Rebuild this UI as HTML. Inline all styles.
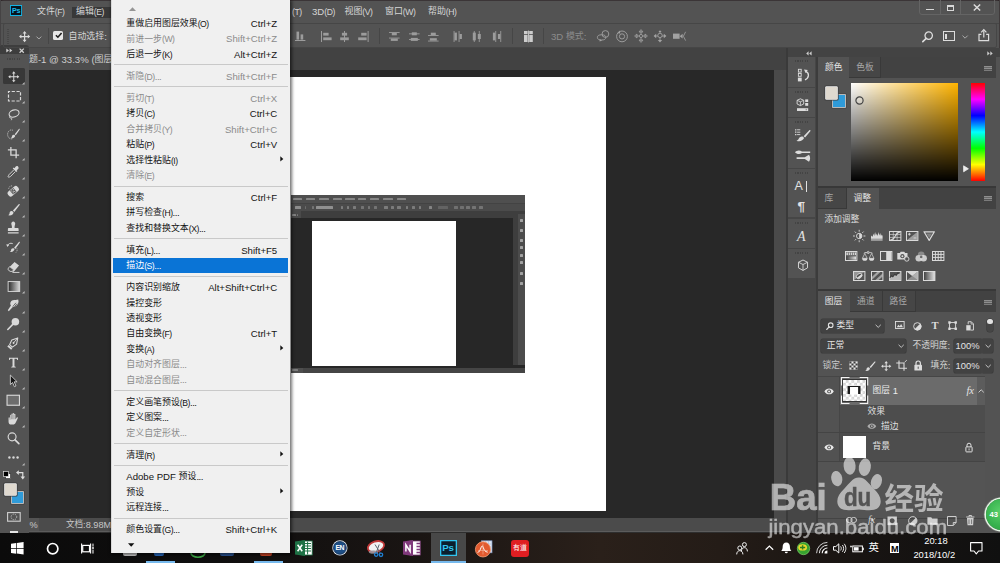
<!DOCTYPE html>
<html lang="zh"><head><meta charset="utf-8"><title>Photoshop - 编辑菜单</title><style>
html,body{margin:0;padding:0}
body{width:1000px;height:563px;overflow:hidden;background:#535353;position:relative;font-family:"Liberation Sans","Noto Sans CJK SC",sans-serif}
.r,.t,.i{position:absolute}
.t{white-space:nowrap;display:flex;align-items:center}
.c{display:block;flex:none;position:relative;top:-.04em;font-size:.93em;width:1em;height:1em;line-height:1em;color:inherit}
.i{overflow:visible}
.k{display:block;flex:none;font-size:.9em;letter-spacing:-.45px}
.d{display:block;flex:none;letter-spacing:-.5px}

</style></head><body>
<div class="r" style="left:0px;top:0px;width:1000px;height:24px;background:#535353;"></div>
<div class="r" style="left:0px;top:23px;width:1000px;height:1px;background:#474747;"></div>
<div class="r" style="left:0px;top:24px;width:1000px;height:24px;background:#535353;"></div>
<div class="r" style="left:28px;top:48px;width:758px;height:22px;background:#424242;"></div>
<div class="r" style="left:28px;top:48px;width:180px;height:22px;background:#4d4d4d;"></div>
<div class="r" style="left:28px;top:70px;width:746px;height:448px;background:#282828;"></div>
<div class="r" style="left:774px;top:70px;width:12.4px;height:448px;background:#4a4a4a;"></div>
<div class="r" style="left:786px;top:48px;width:2px;height:485px;background:#3a3a3a;"></div>
<div class="r" style="left:290px;top:77.2px;width:315.5px;height:433.5px;background:#fff;"></div>
<div class="r" style="left:28px;top:518px;width:758px;height:13.6px;background:#4b4b4b;"></div>
<div class="r" style="left:28px;top:518px;width:11px;height:13px;background:#535353;"></div>
<div class="r" style="left:28px;top:531.4px;width:972px;height:0.8px;background:#5c5c5c;"></div>
<div class="r" style="left:28px;top:532.2px;width:972px;height:0.8px;background:#2e2e2e;"></div>
<div class="t " style="left:37px;top:4.50px;height:14px;font-size:9.6px;line-height:14px;--c:#d6d6d6;color:#d6d6d6;"><span class="c">文</span><span class="c">件</span><span class="k">(F)</span></div>
<div class="r" style="left:72px;top:7px;width:39px;height:11px;background:#383838;"></div>
<div class="t " style="left:76px;top:4.50px;height:14px;font-size:9.6px;line-height:14px;--c:#d6d6d6;color:#d6d6d6;"><span class="c">编</span><span class="c">辑</span><span class="k">(E)</span></div>
<div class="t " style="left:292px;top:4.50px;height:14px;font-size:9.6px;line-height:14px;--c:#d6d6d6;color:#d6d6d6;"><span class="k">(T)</span></div>
<div class="t " style="left:312px;top:4.50px;height:14px;font-size:9.6px;line-height:14px;--c:#d6d6d6;color:#d6d6d6;">3D<span class="k">(D)</span></div>
<div class="t " style="left:344.5px;top:4.50px;height:14px;font-size:9.6px;line-height:14px;--c:#d6d6d6;color:#d6d6d6;"><span class="c">视</span><span class="c">图</span><span class="k">(V)</span></div>
<div class="t " style="left:385px;top:4.50px;height:14px;font-size:9.6px;line-height:14px;--c:#d6d6d6;color:#d6d6d6;"><span class="c">窗</span><span class="c">口</span><span class="k">(W)</span></div>
<div class="t " style="left:428px;top:4.50px;height:14px;font-size:9.6px;line-height:14px;--c:#d6d6d6;color:#d6d6d6;"><span class="c">帮</span><span class="c">助</span><span class="k">(H)</span></div>
<div class="t " style="left:68.5px;top:29.50px;height:14px;font-size:9.6px;line-height:14px;--c:#d6d6d6;color:#d6d6d6;"><span class="c">自</span><span class="c">动</span><span class="c">选</span><span class="c">择</span>:</div>
<div class="t " style="left:551px;top:29.50px;height:14px;font-size:9.6px;line-height:14px;--c:#8c8c8c;color:#8c8c8c;">3D&nbsp;<span class="c">模</span><span class="c">式</span>:</div>
<div class="t " style="left:29px;top:52.50px;height:14px;font-size:9.6px;line-height:14px;--c:#cfcfcf;color:#cfcfcf;"><span class="c">题</span>-1&nbsp;@&nbsp;33.3%&nbsp;(<span class="c">图</span><span class="c">层</span></div>
<div class="t " style="left:29.5px;top:517.50px;height:14px;font-size:9.2px;line-height:14px;--c:#c8c8c8;color:#c8c8c8;">%</div>
<div class="t " style="left:66px;top:517.50px;height:14px;font-size:9.2px;line-height:14px;--c:#c8c8c8;color:#c8c8c8;"><span class="c">文</span><span class="c">档</span>:8.98M</div>
<div class="r" style="left:0px;top:45.4px;width:28.5px;height:487.6px;background:#535353;"></div>
<div class="r" style="left:0px;top:45.4px;width:28.5px;height:9px;background:#3d3d3d;border-radius:0 3px 0 0"></div>
<div class="r" style="left:788px;top:48px;width:212px;height:9px;background:#424242;"></div>
<div class="r" style="left:788px;top:57px;width:28px;height:476px;background:#454545;"></div>
<div class="r" style="left:816px;top:57px;width:2px;height:476px;background:#3a3a3a;"></div>
<div class="r" style="left:818px;top:57px;width:182px;height:476px;background:#535353;"></div>
<div class="r" style="left:0;top:0;width:1000px;height:8px;box-shadow:inset 0 1px 0 #3b3537;pointer-events:none"></div>
<svg class="i" style="left:0px;top:0px;" width="4" height="4" viewBox="0 0 4 4"><path d="M0 0h4a4 4 0 0 0 -4 4z" fill="#2b2224"/></svg>
<svg class="i" style="left:996px;top:0px;" width="4" height="4" viewBox="0 0 4 4"><path d="M4 0h-4a4 4 0 0 1 4 4z" fill="#2b2224"/></svg>
<div class="r" style="left:999px;top:0px;width:1px;height:48px;background:#3f3a3b;"></div>
<div class="r" style="left:0px;top:0px;width:1px;height:46px;background:#454344;"></div>
<div class="r" style="left:10px;top:5px;width:12px;height:11.3px;background:#06141f;box-shadow:inset 0 0 0 .9px #12b4e6"></div>
<div class="t " style="left:12px;top:3.80px;height:14px;font-size:7.2px;line-height:14px;--c:#19bdf0;color:#19bdf0;font-weight:bold;letter-spacing:-.3px">Ps</div>
<div class="r" style="left:919px;top:-1px;width:75.500px;height:15.500px;border:1px solid #646464;border-radius:0 0 3px 3px;box-sizing:border-box"></div>
<div class="r" style="left:940.2px;top:0px;width:1px;height:14px;background:#646464;"></div>
<div class="r" style="left:959.8px;top:0px;width:1px;height:14px;background:#646464;"></div>
<div class="r" style="left:926px;top:8.5px;width:7.6px;height:1.9px;background:#d8d8d8;"></div>
<div class="r" style="left:946.500px;top:5px;width:7.600px;height:6.200px;border:1.500px solid #d8d8d8;border-top-width:2px;box-sizing:border-box"></div>
<svg class="i" style="left:973.4px;top:3.8px;" width="8" height="7" viewBox="0 0 8 7"><path d="M.8 .5L7.200 6.500M7.200 .5L.8 6.500" stroke="#dcdcdc" stroke-width="1.500"/></svg>
<div class="r" style="left:3px;top:23.200px;width:993.500px;height:25px;border:1px solid #464646;border-radius:2px;box-sizing:border-box"></div>
<div class="r" style="left:7.4px;top:29.4px;width:1.6px;height:14.4px;background:repeating-linear-gradient(0deg,#474747 0 1px,transparent 1px 2px);"></div>
<svg class="i" style="left:18.8px;top:31.3px;" width="11.2" height="11.2" viewBox="0 0 11.2 11.2"><path d="M5.600 1.800v7.600M1.800 5.600h7.600" stroke="#dadada" stroke-width="1.200"/><path d="M5.600 0l2 2.400h-4zM5.600 11.200l2-2.400h-4zM0 5.600l2.400-2v4zM11.200 5.600l-2.400-2v4z" fill="#dadada"/></svg>
<svg class="i" style="left:36.4px;top:35.6px;" width="5.8" height="3.8" viewBox="0 0 5.8 3.8"><path d="M.5 .6L2.900 3 5.300 .6" fill="none" stroke="#b5b5b5" stroke-width=".9"/></svg>
<div class="r" style="left:48.3px;top:28px;width:1px;height:16.4px;background:#464646;"></div>
<div class="r" style="left:53.2px;top:30.6px;width:10px;height:9.8px;background:#e6e6e6;border-radius:1.600px"></div>
<svg class="i" style="left:54.6px;top:32.4px;" width="7.4" height="6.4" viewBox="0 0 7.4 6.4"><path d="M.9 3.200L2.900 5.200 6.600 .9" fill="none" stroke="#1e1e1e" stroke-width="1.600"/></svg>
<svg class="i" style="left:295.4px;top:30.5px;" width="11" height="11" viewBox="0 0 11 11"><rect x="1.500" y=".6" width="2.600" height="8" fill="#9c9c9c"/><rect x="5.600" y="3.400" width="2.600" height="5.200" fill="#9c9c9c"/><rect x="0" y="9" width="10.400" height="1" fill="#9c9c9c"/></svg>
<svg class="i" style="left:320.8px;top:30.5px;" width="11" height="11" viewBox="0 0 11 11"><rect x="0" y="0" width="1" height="11" fill="#9c9c9c"/><rect x="2.200" y="1.800" width="5.400" height="2.800" fill="#9c9c9c"/><rect x="2.200" y="6.400" width="8.400" height="2.800" fill="#9c9c9c"/></svg>
<svg class="i" style="left:340.4px;top:30.5px;" width="11" height="11" viewBox="0 0 11 11"><rect x="4" y="0" width="1" height="11" fill="#9c9c9c"/><rect x="1.900" y="1.800" width="5.200" height="2.800" fill="#9c9c9c"/><rect x=".2" y="6.400" width="8.600" height="2.800" fill="#9c9c9c"/></svg>
<svg class="i" style="left:358.4px;top:30.5px;" width="11" height="11" viewBox="0 0 11 11"><rect x="9.600" y="0" width="1" height="11" fill="#9c9c9c"/><rect x="3.200" y="1.800" width="5.400" height="2.800" fill="#9c9c9c"/><rect x=".2" y="6.400" width="8.400" height="2.800" fill="#9c9c9c"/></svg>
<div class="r" style="left:379px;top:28px;width:1px;height:16.4px;background:#464646;"></div>
<svg class="i" style="left:389.4px;top:30.5px;" width="11" height="11" viewBox="0 0 11 11"><rect x="0" y="1" width="10.600" height=".9" fill="#9c9c9c"/><rect x="2.800" y="1.900" width="5" height="2.400" fill="#9c9c9c"/><rect x="0" y="6.600" width="10.600" height=".9" fill="#9c9c9c"/><rect x="1.800" y="7.500" width="7" height="2.400" fill="#9c9c9c"/></svg>
<svg class="i" style="left:408.8px;top:30.5px;" width="11" height="11" viewBox="0 0 11 11"><rect x="0" y="2.400" width="10.600" height=".9" fill="#9c9c9c"/><rect x="2.800" y="1.300" width="5" height="3" fill="#9c9c9c"/><rect x="0" y="8" width="10.600" height=".9" fill="#9c9c9c"/><rect x="1.800" y="6.900" width="7" height="3" fill="#9c9c9c"/></svg>
<svg class="i" style="left:427.6px;top:30.5px;" width="11" height="11" viewBox="0 0 11 11"><rect x="0" y="4.100" width="10.600" height=".9" fill="#9c9c9c"/><rect x="2.800" y="1.700" width="5" height="2.400" fill="#9c9c9c"/><rect x="0" y="9.600" width="10.600" height=".9" fill="#9c9c9c"/><rect x="1.800" y="7.200" width="7" height="2.400" fill="#9c9c9c"/></svg>
<svg class="i" style="left:453.2px;top:30.5px;" width="11" height="11" viewBox="0 0 11 11"><rect x=".6" y="0" width=".9" height="11" fill="#9c9c9c"/><rect x="1.500" y="1.600" width="2.400" height="7.800" fill="#9c9c9c"/><rect x="5.600" y="0" width=".9" height="11" fill="#9c9c9c"/><rect x="6.500" y="3" width="2.400" height="5" fill="#9c9c9c"/></svg>
<svg class="i" style="left:472.4px;top:30.5px;" width="11" height="11" viewBox="0 0 11 11"><rect x="1.800" y="0" width=".9" height="11" fill="#9c9c9c"/><rect x=".8" y="1.600" width="3" height="7.800" fill="#9c9c9c"/><rect x="6.800" y="0" width=".9" height="11" fill="#9c9c9c"/><rect x="5.800" y="3" width="3" height="5" fill="#9c9c9c"/></svg>
<svg class="i" style="left:491.8px;top:30.5px;" width="11" height="11" viewBox="0 0 11 11"><rect x="3.300" y="0" width=".9" height="11" fill="#9c9c9c"/><rect x=".9" y="1.600" width="2.400" height="7.800" fill="#9c9c9c"/><rect x="8.300" y="0" width=".9" height="11" fill="#9c9c9c"/><rect x="5.900" y="3" width="2.400" height="5" fill="#9c9c9c"/></svg>
<div class="r" style="left:512px;top:28px;width:1px;height:16.4px;background:#464646;"></div>
<svg class="i" style="left:523.8px;top:30.5px;" width="11" height="11" viewBox="0 0 11 11"><rect x="0" y="0" width="3.600" height="3.200" fill="#cdcdcd"/><rect x="5.200" y="0" width="3.600" height="3.200" fill="#cdcdcd"/><rect x="0" y="4" width="3.600" height="7" fill="#cdcdcd"/><rect x="5.200" y="4" width="3.600" height="7" fill="#cdcdcd"/><rect x="4" y="-.4" width=".9" height="11.800" fill="#cdcdcd"/></svg>
<div class="r" style="left:543.2px;top:28px;width:1px;height:16.4px;background:#464646;"></div>
<svg class="i" style="left:596.6px;top:30px;" width="13" height="12" viewBox="0 0 13 12"><ellipse cx="4.600" cy="7.400" rx="4.200" ry="2.600" fill="none" stroke="#a2a2a2" stroke-width=".9"/><circle cx="8.400" cy="4" r="3.400" fill="none" stroke="#a2a2a2" stroke-width=".9"/><path d="M2.600 9.200l2.600 1.400-2.600 1z" fill="#a2a2a2"/></svg>
<svg class="i" style="left:616px;top:29.8px;" width="12" height="12.5" viewBox="0 0 12 12.5"><circle cx="6" cy="6.400" r="5.400" fill="none" stroke="#a2a2a2" stroke-width=".9"/><circle cx="6" cy="6.400" r="2.600" fill="none" stroke="#a2a2a2" stroke-width=".9"/><path d="M1.200 3.200l2.800-2.600.2 3z" fill="#a2a2a2"/></svg>
<svg class="i" style="left:634.8px;top:30px;" width="12" height="12" viewBox="0 0 12 12"><path d="M6 1v10M1 6h10" stroke="#a2a2a2" stroke-width=".9"/><path d="M6 -.4l2 2.400h-4zM6 12.400l2-2.400h-4zM-.4 6l2.400-2v4zM12.400 6l-2.400-2v4z" fill="none" stroke="#a2a2a2" stroke-width=".8"/><circle cx="6" cy="6" r="1.600" fill="#535353" stroke="#a2a2a2" stroke-width=".8"/></svg>
<svg class="i" style="left:654px;top:29.8px;" width="12" height="12.5" viewBox="0 0 12 12.5"><path d="M6 1v10M1 6h10" stroke="#a2a2a2" stroke-width=".9"/><path d="M6 12.600l2.200-2.600h-4.400zM-.4 6l2.600-2.200v4.400zM12.400 6l-2.600-2.200v4.400zM6 .2l1.600 1.800h-3.200z" fill="#a2a2a2"/><circle cx="6" cy="5.400" r="2.200" fill="#535353" stroke="#a2a2a2" stroke-width=".9"/></svg>
<svg class="i" style="left:672.8px;top:30.8px;" width="13" height="11" viewBox="0 0 13 11"><rect x="0" y="2.600" width="6.600" height="5.200" fill="#a2a2a2"/><path d="M6.600 5.200l3-2.400v4.800z" fill="#a2a2a2"/><path d="M12.600 .8l-2.200 4.400 2.200 4.400" fill="none" stroke="#a2a2a2" stroke-width=".8"/></svg>
<svg class="i" style="left:921.8px;top:30.6px;" width="11.4" height="11.4" viewBox="0 0 11.4 11.4"><circle cx="6.700" cy="4.600" r="3.700" fill="none" stroke="#dedede" stroke-width="1.300"/><path d="M4.200 7.400L.8 10.600" stroke="#dedede" stroke-width="1.600" stroke-linecap="round"/></svg>
<div class="r" style="left:943.400px;top:31.400px;width:11.800px;height:9.400px;border:1.200px solid #dcdcdc;border-top-width:1.800px;box-sizing:border-box"></div>
<div class="r" style="left:945.4px;top:34.2px;width:1.8px;height:4.6px;background:#dcdcdc;"></div>
<svg class="i" style="left:962.2px;top:34.8px;" width="6.2" height="4" viewBox="0 0 6.2 4"><path d="M.5 .6L3.100 3.200 5.700 .6" fill="none" stroke="#b5b5b5" stroke-width=".9"/></svg>
<svg class="i" style="left:977.8px;top:28.8px;" width="11.6" height="12.4" viewBox="0 0 11.6 12.4"><path d="M3.400 5.400h-2.400v6.200h9.600v-6.200h-2.400" fill="none" stroke="#dcdcdc" stroke-width="1.200"/><path d="M5.800 8.400v-7" stroke="#dcdcdc" stroke-width="1.200"/><path d="M3.200 3.400l2.600-2.800 2.600 2.800" fill="none" stroke="#dcdcdc" stroke-width="1.200"/></svg>
<svg class="i" style="left:6px;top:48px;" width="7" height="5" viewBox="0 0 7 5"><path d="M0.3 0.5 L3 2.5 L0.3 4.5Z M3.6 0.5 L6.3 2.5 L3.6 4.5Z" fill="#cfcfcf"/></svg>
<svg class="i" style="left:19.3px;top:47.7px;" width="5.4" height="5.4" viewBox="0 0 5.4 5.4"><path d="M0.6 0.6 L4.8 4.8 M4.8 0.6 L0.6 4.8" stroke="#d0d0d0" stroke-width="1.3"/></svg>
<div class="r" style="left:7px;top:58px;width:14px;height:1.8px;background:repeating-linear-gradient(90deg,#444 0 1.200px,transparent 1.200px 2.400px);"></div>
<div class="r" style="left:3.2px;top:68px;width:22px;height:16.4px;background:#383838;border-radius:1.5px"></div>
<svg class="i" style="left:6.85px;top:69.85px;" width="13.5" height="13.5" viewBox="0 0 20 20"><path d="M10 3.6v12.8M3.6 10h12.8" stroke="#d9d9d9" stroke-width="1.5"/><path d="M10 1.8l2.6 3.2h-5.2zM10 18.2l2.6-3.2h-5.2zM1.8 10l3.2-2.6v5.2zM18.2 10l-3.2-2.6v5.2z" fill="#d9d9d9"/></svg>
<svg class="i" style="left:21.6px;top:81.8px;" width="2.6" height="2.6" viewBox="0 0 2.6 2.6"><path d="M2.6 0V2.600H0Z" fill="#bdbdbd"/></svg>
<svg class="i" style="left:3.6px;top:85.66px;" width="20" height="20" viewBox="0 0 20 20"><rect x="4.5" y="5.5" width="12" height="9.5" fill="none" stroke="#d9d9d9" stroke-width="1.2" stroke-dasharray="3.2 1.6" stroke-dashoffset="1.6"/></svg>
<svg class="i" style="left:21.6px;top:100.86px;" width="2.6" height="2.6" viewBox="0 0 2.6 2.6"><path d="M2.6 0V2.600H0Z" fill="#bdbdbd"/></svg>
<svg class="i" style="left:5.35px;top:106.47px;" width="16.5" height="16.5" viewBox="0 0 20 20"><ellipse cx="11" cy="9" rx="6.2" ry="4.2" transform="rotate(-18 11 9)" fill="none" stroke="#d9d9d9" stroke-width="1.3"/><path d="M6.2 12.2c-1.2 1-.6 2.6 .8 2.4c1.2-.2 1.6 1.2 .6 2.6" fill="none" stroke="#d9d9d9" stroke-width="1.1"/></svg>
<svg class="i" style="left:21.6px;top:119.92px;" width="2.6" height="2.6" viewBox="0 0 2.6 2.6"><path d="M2.6 0V2.600H0Z" fill="#bdbdbd"/></svg>
<svg class="i" style="left:5.35px;top:125.53px;" width="16.5" height="16.5" viewBox="0 0 20 20"><path d="M9.5 5.2a4.6 5.4 0 1 0 0 10" fill="none" stroke="#d9d9d9" stroke-width="1" stroke-dasharray="1.3 1.1"/><path d="M16.8 3.6l-5 6.4 1.3 1.2 4.6-6.6c.5-.9-.3-1.6-.9-1zM11.2 10.6c-1.6-.4-2.8.8-2.8 2.2c0 1-.6 1.6-1.4 1.8c2.6 1 5-.6 5.4-2.8z" fill="#d9d9d9"/></svg>
<svg class="i" style="left:21.6px;top:138.98px;" width="2.6" height="2.6" viewBox="0 0 2.6 2.6"><path d="M2.6 0V2.600H0Z" fill="#bdbdbd"/></svg>
<svg class="i" style="left:6.1px;top:145.34px;" width="15" height="15" viewBox="0 0 20 20"><path d="M6.5 2.5v11h11M2.5 6.5h11v11" fill="none" stroke="#d9d9d9" stroke-width="1.7"/></svg>
<svg class="i" style="left:21.6px;top:158.04px;" width="2.6" height="2.6" viewBox="0 0 2.6 2.6"><path d="M2.6 0V2.600H0Z" fill="#bdbdbd"/></svg>
<svg class="i" style="left:5.35px;top:163.65px;" width="16.5" height="16.5" viewBox="0 0 20 20"><path d="M15.8 3c-1-1-2.4-.6-3 .4l-1.3 1.7-.9-.8-1.2 1.3 4.4 4.2 1.2-1.3-.9-.8 1.6-1.4c.9-.7 1.100-2.300.1-3.300z" fill="#d9d9d9"/><path d="M10.600 7.200l-5.800 5.800c-.7.700-.5 1.500-1.100 2.500l.6.600c1-.6 1.800-.4 2.500-1.100l5.800-5.800" fill="none" stroke="#d9d9d9" stroke-width="1.100"/></svg>
<svg class="i" style="left:21.6px;top:177.1px;" width="2.6" height="2.6" viewBox="0 0 2.6 2.6"><path d="M2.6 0V2.600H0Z" fill="#bdbdbd"/></svg>
<svg class="i" style="left:5.35px;top:182.71px;" width="16.5" height="16.5" viewBox="0 0 20 20"><g transform="rotate(-40 10 10)"><rect x="2.500" y="6.300" width="15" height="7.400" rx="2.800" fill="#d9d9d9"/><rect x="7.300" y="7" width="5.400" height="6" fill="#535353"/><circle cx="8.800" cy="8.600" r=".7" fill="#d9d9d9"/><circle cx="11.200" cy="8.600" r=".7" fill="#d9d9d9"/><circle cx="8.800" cy="11.400" r=".7" fill="#d9d9d9"/><circle cx="11.200" cy="11.400" r=".7" fill="#d9d9d9"/><circle cx="10" cy="10" r=".7" fill="#d9d9d9"/></g><path d="M4.500 7a3.600 3.600 0 0 1 5-3.200" fill="none" stroke="#d9d9d9" stroke-width=".9" stroke-dasharray="1.200 1"/></svg>
<svg class="i" style="left:21.6px;top:196.16px;" width="2.6" height="2.6" viewBox="0 0 2.6 2.6"><path d="M2.6 0V2.600H0Z" fill="#bdbdbd"/></svg>
<svg class="i" style="left:5.35px;top:201.77px;" width="16.5" height="16.5" viewBox="0 0 20 20"><path d="M16.600 2.600c.8-.7 1.700.2 1.100 1l-6.400 8.400-1.700-1.600zM9 11.200c-1.900-.6-3.400.7-3.500 2.400c-.1 1.300-.9 2-2 2.300c3.200 1.400 6.300-.3 6.900-3.200z" fill="#d9d9d9"/></svg>
<svg class="i" style="left:21.6px;top:215.22px;" width="2.6" height="2.6" viewBox="0 0 2.6 2.6"><path d="M2.6 0V2.600H0Z" fill="#bdbdbd"/></svg>
<svg class="i" style="left:5.35px;top:220.83px;" width="16.5" height="16.5" viewBox="0 0 20 20"><path d="M7.700 3.800a2.400 2.400 0 1 1 4.600 0c-.5 1.500-.9 3-.6 4.700h3.500c.9 0 1.300.5 1.300 1.400v2.200h-13v-2.200c0-.9.400-1.400 1.300-1.400h3.500c.3-1.700-.1-3.200-.6-4.700zM3.500 13.500h13v1.800h-13z" fill="#d9d9d9"/></svg>
<svg class="i" style="left:21.6px;top:234.28px;" width="2.6" height="2.6" viewBox="0 0 2.6 2.6"><path d="M2.6 0V2.600H0Z" fill="#bdbdbd"/></svg>
<svg class="i" style="left:5.35px;top:239.89px;" width="16.5" height="16.5" viewBox="0 0 20 20"><path d="M16.800 2.400c.7-.7 1.600.1 1.100.9l-5.400 7.500-1.500-1.400zM10.400 10c-1.600-.5-2.900.6-3 2.100c0 1-.7 1.700-1.700 1.900c2.700 1.200 5.300-.3 5.800-2.700z" fill="#d9d9d9"/><path d="M3 7.200a5 5 0 0 1 6.400-2.800" fill="none" stroke="#d9d9d9" stroke-width="1.100"/><path d="M1.600 5.200l3.600.6-2.400 2.800z" fill="#d9d9d9"/><path d="M14.400 10.200a4.800 4.800 0 0 1-1.600 5.400" fill="none" stroke="#d9d9d9" stroke-width=".9" stroke-dasharray="1.100 1"/></svg>
<svg class="i" style="left:21.6px;top:253.34px;" width="2.6" height="2.6" viewBox="0 0 2.6 2.6"><path d="M2.6 0V2.600H0Z" fill="#bdbdbd"/></svg>
<svg class="i" style="left:5.35px;top:258.95px;" width="16.5" height="16.5" viewBox="0 0 20 20"><path d="M11.600 3.600l5.400 4.200-6.400 7.600h-4.200l-2.600-2.200c-.6-.5-.6-1.100-.1-1.700z" fill="#d9d9d9"/><path d="M5.600 9.200l4.800 3.900-1.600 1.900h-2.500l-2.500-2.100c-.4-.4-.4-.8 0-1.200z" fill="#535353" stroke="#d9d9d9" stroke-width=".9"/><path d="M9 16.300h8.500" stroke="#d9d9d9" stroke-width="1.100"/></svg>
<svg class="i" style="left:21.6px;top:272.4px;" width="2.6" height="2.6" viewBox="0 0 2.6 2.6"><path d="M2.6 0V2.600H0Z" fill="#bdbdbd"/></svg>
<svg class="i" style="left:5.1px;top:277.76px;" width="17" height="17" viewBox="0 0 20 20"><defs><linearGradient id="tg"><stop offset="0" stop-color="#2a2a2a"/><stop offset="1" stop-color="#d8d8d8"/></linearGradient></defs><rect x="3.700" y="4.200" width="13.600" height="11.600" fill="url(#tg)" stroke="#d9d9d9" stroke-width="1.100"/></svg>
<svg class="i" style="left:21.6px;top:291.46px;" width="2.6" height="2.6" viewBox="0 0 2.6 2.6"><path d="M2.6 0V2.600H0Z" fill="#bdbdbd"/></svg>
<svg class="i" style="left:5.35px;top:297.07px;" width="16.5" height="16.5" viewBox="0 0 20 20"><path d="M7.200 10.400c-1.600-2.400-.6-5.600 2.400-6.400c2.200-.6 4.200-.4 6.400-1c1.200 3-.2 6.600-3.200 8.200c-1 .5-2.200.7-3 .6l-5.200 5.600-1.200-1.200z" fill="#d9d9d9"/><path d="M9.500 11.500l3.800-4.500M11.500 11.800l3-3.600" stroke="#535353" stroke-width="1"/></svg>
<svg class="i" style="left:21.6px;top:310.52px;" width="2.6" height="2.6" viewBox="0 0 2.6 2.6"><path d="M2.6 0V2.600H0Z" fill="#bdbdbd"/></svg>
<svg class="i" style="left:5.35px;top:316.13px;" width="16.5" height="16.5" viewBox="0 0 20 20"><circle cx="12.600" cy="7" r="4.600" fill="#d9d9d9"/><path d="M9.400 10.200l-6 6.200" stroke="#d9d9d9" stroke-width="1.900" stroke-linecap="round"/></svg>
<svg class="i" style="left:21.6px;top:329.58px;" width="2.6" height="2.6" viewBox="0 0 2.6 2.6"><path d="M2.6 0V2.600H0Z" fill="#bdbdbd"/></svg>
<svg class="i" style="left:5.35px;top:335.19px;" width="16.5" height="16.5" viewBox="0 0 20 20"><g transform="rotate(40 10 10)"><path d="M10 1.500l3.800 6.700-1.500 6h-4.600l-1.500-6z" fill="none" stroke="#d9d9d9" stroke-width="1.300" stroke-linejoin="round"/><path d="M10 2.500v6" stroke="#d9d9d9" stroke-width="1"/><circle cx="10" cy="9.400" r="1.200" fill="#d9d9d9"/><rect x="7" y="15.200" width="6" height="2.400" fill="#d9d9d9"/></g></svg>
<svg class="i" style="left:21.6px;top:348.64px;" width="2.6" height="2.6" viewBox="0 0 2.6 2.6"><path d="M2.6 0V2.600H0Z" fill="#bdbdbd"/></svg>
<svg class="i" style="left:6.1px;top:355.0px;" width="15" height="15" viewBox="0 0 20 20"><path d="M4 3.500h12v3.300h-1c-.2-1.300-.7-1.900-2-1.900h-1.700v9.400c0 1 .4 1.300 1.700 1.400v1h-6v-1c1.300-.1 1.700-.4 1.700-1.400v-9.400h-1.700c-1.300 0-1.800.6-2 1.900h-1z" fill="#d9d9d9"/></svg>
<svg class="i" style="left:21.6px;top:367.7px;" width="2.6" height="2.6" viewBox="0 0 2.6 2.6"><path d="M2.6 0V2.600H0Z" fill="#bdbdbd"/></svg>
<svg class="i" style="left:5.35px;top:373.31px;" width="16.5" height="16.5" viewBox="0 0 20 20"><path d="M6.500 2.500l8.200 8.200h-3.600l2.200 5-1.900.9-2.200-5.100-2.700 2.500z" fill="#161616" stroke="#d9d9d9" stroke-width="1" stroke-linejoin="round"/></svg>
<svg class="i" style="left:21.6px;top:386.76px;" width="2.6" height="2.6" viewBox="0 0 2.6 2.6"><path d="M2.6 0V2.600H0Z" fill="#bdbdbd"/></svg>
<svg class="i" style="left:4.35px;top:391.37px;" width="18.5" height="18.5" viewBox="0 0 20 20"><rect x="3.300" y="4.600" width="13.400" height="10.800" fill="#6d6d6d" stroke="#d9d9d9" stroke-width="1.200"/></svg>
<svg class="i" style="left:21.6px;top:405.82px;" width="2.6" height="2.6" viewBox="0 0 2.6 2.6"><path d="M2.6 0V2.600H0Z" fill="#bdbdbd"/></svg>
<svg class="i" style="left:5.35px;top:411.43px;" width="16.5" height="16.5" viewBox="0 0 20 20"><path d="M6.300 10.500v-5.200c0-1.100 1.500-1.100 1.500 0v-1.500c0-1.100 1.600-1.100 1.600 0v-.6c0-1.100 1.600-1.100 1.600 0v1c0-1.100 1.600-1.100 1.600 0v6.100l1.500-2.200c.6-.9 1.900-.2 1.400.8l-2.600 5.200c-.6 1.200-1.500 2.400-3.500 2.400h-1.400c-2.400 0-3.700-1.500-3.700-3.600v-4.400c0-1.100 1.500-1.100 1.500 0v2z" fill="#d9d9d9"/><path d="M7.800 5v5M9.400 4v6M11 4.500v5.500" stroke="#535353" stroke-width=".5"/></svg>
<svg class="i" style="left:21.6px;top:424.88px;" width="2.6" height="2.6" viewBox="0 0 2.6 2.6"><path d="M2.6 0V2.600H0Z" fill="#bdbdbd"/></svg>
<svg class="i" style="left:5.35px;top:430.49px;" width="16.5" height="16.5" viewBox="0 0 20 20"><circle cx="8.600" cy="8.300" r="4.800" fill="none" stroke="#d9d9d9" stroke-width="1.400"/><path d="M12.200 11.900l4.600 4.600" stroke="#d9d9d9" stroke-width="2" stroke-linecap="round"/></svg>
<svg class="i" style="left:5.1px;top:449.3px;" width="17" height="17" viewBox="0 0 20 20"><circle cx="5.200" cy="10" r="1.400" fill="#d9d9d9"/><circle cx="10" cy="10" r="1.400" fill="#d9d9d9"/><circle cx="14.800" cy="10" r="1.400" fill="#d9d9d9"/></svg>
<svg class="i" style="left:21.6px;top:463.0px;" width="2.6" height="2.6" viewBox="0 0 2.6 2.6"><path d="M2.6 0V2.600H0Z" fill="#bdbdbd"/></svg>
<svg class="i" style="left:2.6px;top:470.6px;" width="8" height="8" viewBox="0 0 8 8"><rect x="2.600" y="2.600" width="5" height="5" fill="#fff" stroke="#222" stroke-width=".6"/><rect x=".4" y=".4" width="5" height="5" fill="#000" stroke="#ddd" stroke-width=".7"/></svg>
<svg class="i" style="left:15.6px;top:470.2px;" width="9.4" height="9.4" viewBox="0 0 9.4 9.4"><path d="M2.400 2.600h4.400v4.400" fill="none" stroke="#ddd" stroke-width="1.200"/><path d="M0 2.600l2.800-2.300v4.600z" fill="#ddd"/><path d="M6.800 9.400l-2.300-2.800h4.600z" fill="#ddd"/></svg>
<div class="r" style="left:12.2px;top:491.6px;width:11px;height:11.2px;background:#2f9bd9;box-shadow:0 0 0 .8px #d9d9d9, 0 0 0 1.400px #3a3a3a"></div>
<div class="r" style="left:4.8px;top:484.4px;width:11.4px;height:10.8px;background:#dfd9cf;box-shadow:0 0 0 .8px #f0f0f0, 0 0 0 1.600px #3a3a3a;border-radius:.5px"></div>
<svg class="i" style="left:6.6px;top:512.2px;" width="14" height="10" viewBox="0 0 14 10"><rect x=".6" y=".6" width="12.600" height="8.600" fill="none" stroke="#d0d0d0" stroke-width="1.100"/><circle cx="6.900" cy="4.900" r="2.800" fill="none" stroke="#bdbdbd" stroke-width=".9" stroke-dasharray="1.200 .8"/></svg>
<div class="r" style="left:9.6px;top:530.8px;width:8.6px;height:2.4px;background:#e4e4e4;"></div>
<div class="r" style="left:788px;top:48px;width:212px;height:9.6px;background:#434343;"></div>
<svg class="i" style="left:806px;top:51px;" width="6" height="5" viewBox="0 0 6 5"><path d="M2.600 .3L.2 2.400 2.600 4.500zM5.600 .3L3.200 2.400 5.600 4.500z" fill="#cfcfcf"/></svg>
<svg class="i" style="left:986.6px;top:51px;" width="6" height="5" viewBox="0 0 6 5"><path d="M.3 .3L2.700 2.400 .3 4.500zM3.300 .3L5.700 2.400 3.300 4.500z" fill="#cfcfcf"/></svg>
<div class="r" style="left:788px;top:57px;width:28px;height:476px;background:#464646;"></div>
<div class="r" style="left:788.4px;top:57.4px;width:26.8px;height:29.4px;background:#535353;"></div>
<div class="r" style="left:795.4px;top:60.4px;width:13.6px;height:1.8px;background:repeating-linear-gradient(90deg,#444 0 1.200px,transparent 1.200px 2.400px);"></div>
<div class="r" style="left:788.4px;top:88.4px;width:26.8px;height:28.19999999999999px;background:#535353;"></div>
<div class="r" style="left:795.4px;top:91.4px;width:13.6px;height:1.8px;background:repeating-linear-gradient(90deg,#444 0 1.200px,transparent 1.200px 2.400px);"></div>
<div class="r" style="left:788.4px;top:118.4px;width:26.8px;height:49.400000000000006px;background:#535353;"></div>
<div class="r" style="left:795.4px;top:121.4px;width:13.6px;height:1.8px;background:repeating-linear-gradient(90deg,#444 0 1.200px,transparent 1.200px 2.400px);"></div>
<div class="r" style="left:788.4px;top:169.4px;width:26.8px;height:47.79999999999998px;background:#535353;"></div>
<div class="r" style="left:795.4px;top:172.4px;width:13.6px;height:1.8px;background:repeating-linear-gradient(90deg,#444 0 1.200px,transparent 1.200px 2.400px);"></div>
<div class="r" style="left:788.4px;top:218.8px;width:26.8px;height:28.799999999999983px;background:#535353;"></div>
<div class="r" style="left:795.4px;top:221.8px;width:13.6px;height:1.8px;background:repeating-linear-gradient(90deg,#444 0 1.200px,transparent 1.200px 2.400px);"></div>
<div class="r" style="left:788.4px;top:249.2px;width:26.8px;height:29.19999999999999px;background:#535353;"></div>
<div class="r" style="left:795.4px;top:252.2px;width:13.6px;height:1.8px;background:repeating-linear-gradient(90deg,#444 0 1.200px,transparent 1.200px 2.400px);"></div>
<svg class="i" style="left:795px;top:66px;" width="16" height="16" viewBox="0 0 16 16"><rect x="3.400" y="3.300" width="2.800" height="2.800" fill="none" stroke="#dcdcdc" stroke-width=".9"/><rect x="3.400" y="7.500" width="2.800" height="2.800" fill="none" stroke="#dcdcdc" stroke-width=".9"/><rect x="2.900" y="11.600" width="3.800" height="3.800" fill="#dcdcdc"/><path d="M10 13.800c4.200-2 4.600-6.400.9-8.400" fill="none" stroke="#dcdcdc" stroke-width="1.300"/><path d="M9 3.600l3.800.4-2.200 3z" fill="#dcdcdc"/></svg>
<svg class="i" style="left:795px;top:95px;" width="16" height="16" viewBox="0 0 16 16"><path d="M5.400 3.800l3.300 1.500v3.700l-3.300 1.600-3.300-1.600v-3.700z" fill="none" stroke="#dcdcdc" stroke-width=".9"/><path d="M2.100 5.300l3.300 1.500 3.300-1.500M5.400 6.800v3.800" fill="none" stroke="#dcdcdc" stroke-width=".8"/><rect x="10.200" y="4.400" width="3" height="2.600" fill="#dcdcdc"/><rect x="10.200" y="8" width="3" height="2.800" fill="#dcdcdc"/><rect x="2" y="13.200" width="11.200" height="2.800" fill="#dcdcdc"/><rect x="10.800" y="13.900" width=".7" height="1.400" fill="#535353"/></svg>
<svg class="i" style="left:790px;top:120px;" width="26" height="48" viewBox="790 120 26 48"><path d="M795.100 129.800h1.300M795.100 132.200h1.300M795.100 134.600h1.300" stroke="#dcdcdc" stroke-width="1.200"/><path d="M797.100 129.800h3.200M797.100 132.200h3.200M797.100 134.600h3.200" stroke="#dcdcdc" stroke-width=".9"/><path d="M809.300 130.300c.7-.6 1.500.1 1 .9l-5.200 6.300-1.500-1.300zM803 136.800c-1.900-.7-3.600.5-4.300 2c-.5 1.100-1.300 1.700-2.300 1.900c3 1.300 6.500.3 7.700-2.600z" fill="#dcdcdc"/></svg>
<svg class="i" style="left:790px;top:120px;" width="26" height="48" viewBox="790 120 26 48"><path d="M795 152.200c1.400-1.700 4.400-2.600 7-.7h8.200v1.500h-8.200c-2.600 1.800-5.600.9-7-.8z" fill="#dcdcdc"/><path d="M796.600 157.300h8.200l4.200-2.500c1.500 2.200 1.500 4.800 0 7l-4.200-2.800h-8.200z" fill="#dcdcdc"/></svg>
<div class="t " style="left:794.6px;top:179.20px;height:14px;font-size:12.5px;line-height:14px;--c:#e2e2e2;color:#e2e2e2;">A</div>
<div class="r" style="left:805.8px;top:180.6px;width:1px;height:11.4px;background:#e2e2e2;"></div>
<div class="t " style="left:797.6px;top:199.50px;height:14px;font-size:13.5px;line-height:14px;--c:#e2e2e2;color:#e2e2e2;font-weight:bold">¶</div>
<div class="t " style="left:797px;top:229.60px;height:14px;font-size:14px;line-height:14px;--c:#e2e2e2;color:#e2e2e2;font-family:'Liberation Serif',serif;font-style:italic;">A</div>
<svg class="i" style="left:796.6px;top:259.4px;" width="12" height="12.8" viewBox="0 0 14 15"><path d="M7 1.200l5.300 2.600v6.600l-5.300 3-5.300-3v-6.600z" fill="none" stroke="#dcdcdc" stroke-width="1.100" stroke-linejoin="round"/><path d="M1.700 3.800l5.300 2.700 5.300-2.700M7 6.500v6.900" fill="none" stroke="#dcdcdc" stroke-width="1"/></svg>
<div class="r" style="left:816px;top:57px;width:2px;height:476px;background:#3c3c3c;"></div>
<div class="r" style="left:818px;top:57px;width:182px;height:476px;background:#535353;"></div>
<div class="r" style="left:818px;top:57px;width:178px;height:21.4px;background:#424242;"></div>
<div class="r" style="left:818px;top:57px;width:31.4px;height:22px;background:#535353;"></div>
<div class="t " style="left:825px;top:60.80px;height:14px;font-size:9.4px;line-height:14px;--c:#e6e6e6;color:#e6e6e6;"><span class="c">颜</span><span class="c">色</span></div>
<div class="r" style="left:849.4px;top:57px;width:31.2px;height:21.4px;background:#464646;box-shadow:inset -1px 0 0 #393939, inset 0 -1px 0 #393939"></div>
<div class="t " style="left:856.2px;top:60.80px;height:14px;font-size:9.4px;line-height:14px;--c:#a8a8a8;color:#a8a8a8;"><span class="c">色</span><span class="c">板</span></div>
<svg class="i" style="left:984px;top:65.6px;" width="8" height="5" viewBox="0 0 8 5"><path d="M0 .6h8M0 2.400h8M0 4.200h8" stroke="#8f8f8f" stroke-width="1.100"/></svg>
<div class="r" style="left:818px;top:185.6px;width:178px;height:2.2px;background:#383838;"></div>
<div class="r" style="left:833px;top:95px;width:12.2px;height:11.6px;background:#2f9bd9;box-shadow:0 0 0 .8px #d9d9d9, 0 0 0 1.400px #3c3c3c"></div>
<div class="r" style="left:825.6px;top:86.8px;width:11.8px;height:11.8px;background:#dfd9cf;box-shadow:0 0 0 .8px #f0f0f0, 0 0 0 1.600px #3c3c3c;border-radius:.5px"></div>
<div class="r" style="left:850.8px;top:83.2px;width:107.600px;height:97.600px;background:linear-gradient(to top,#000,rgba(0,0,0,0)),linear-gradient(to right,#fff,#ffb400)"></div>
<div class="r" style="left:970.6px;top:83.2px;width:14px;height:97.600px;background:linear-gradient(to bottom,#f00 0%,#f0f 16.600%,#00f 33.300%,#0ff 50%,#0f0 66.600%,#ff0 83.300%,#f00 100%)"></div>
<svg class="i" style="left:854.6px;top:95.8px;" width="9" height="9" viewBox="0 0 9 9"><circle cx="4.500" cy="4.500" r="3.600" fill="rgba(255,255,255,.12)" stroke="#444" stroke-width="1.200"/></svg>
<svg class="i" style="left:963.2px;top:164.6px;" width="6" height="7.6" viewBox="0 0 6 7.6"><path d="M.6 .8L5.400 3.800 .6 6.800z" fill="#ededed" stroke="#ededed" stroke-width=".8" stroke-linejoin="round"/></svg>
<div class="r" style="left:818px;top:187.8px;width:178px;height:21.4px;background:#424242;"></div>
<div class="r" style="left:818px;top:187.8px;width:28.6px;height:21.4px;background:#464646;box-shadow:inset -1px 0 0 #393939, inset 0 -1px 0 #393939"></div>
<div class="t " style="left:824.6px;top:191.60px;height:14px;font-size:9.4px;line-height:14px;--c:#a8a8a8;color:#a8a8a8;"><span class="c">库</span></div>
<div class="r" style="left:846.6px;top:187.8px;width:32px;height:22px;background:#535353;"></div>
<div class="t " style="left:853.6px;top:191.60px;height:14px;font-size:9.4px;line-height:14px;--c:#e6e6e6;color:#e6e6e6;"><span class="c">调</span><span class="c">整</span></div>
<svg class="i" style="left:984px;top:196.4px;" width="8" height="5" viewBox="0 0 8 5"><path d="M0 .6h8M0 2.400h8M0 4.200h8" stroke="#8f8f8f" stroke-width="1.100"/></svg>
<div class="t " style="left:824.4px;top:212.80px;height:14px;font-size:9.4px;line-height:14px;--c:#dedede;color:#dedede;"><span class="c">添</span><span class="c">加</span><span class="c">调</span><span class="c">整</span></div>
<div class="r" style="left:818px;top:288.6px;width:178px;height:2.4px;background:#383838;"></div>
<svg class="i" style="left:852.7px;top:231.3px;" width="12.4" height="10" viewBox="0 0 12.4 10"><circle cx="6.200" cy="5" r="2.700" fill="none" stroke="#dadada" stroke-width=".9"/><path d="M6.200 2.300a2.700 2.700 0 0 1 0 5.400z" fill="#dadada"/><path d="M6.200 -1.200v1.900M6.200 9.300v1.900M0 5h1.900M10.500 5h1.900M1.800 .6l1.300 1.300M9.300 8.100l1.300 1.300M10.600 .6l-1.300 1.300M3.100 8.100l-1.300 1.300" stroke="#dadada" stroke-width=".9"/></svg>
<svg class="i" style="left:870.7px;top:231.3px;" width="12.4" height="10" viewBox="0 0 12.4 10"><path d="M0 9.500v-4l.8-1 .8 1.500.8-3.500.8 2.500.9-4 .9 3.500.8-2 .8 2.500.9-4 .8 3.500.9-2.500.8 3 .8-1.500.8 1.500v4.500z" fill="#dadada"/><path d="M0 8.200h12.400" stroke="#535353" stroke-width=".6"/></svg>
<svg class="i" style="left:888.5px;top:231.3px;" width="12.4" height="10" viewBox="0 0 12.4 10"><rect x=".5" y=".5" width="11.400" height="9" fill="none" stroke="#dadada" stroke-width="1"/><path d="M4.300 .5v9M8.100 .5v9M.5 3.500h11.400M.5 6.500h11.400" stroke="#dadada" stroke-width=".6"/><path d="M.8 9.200c4-.4 4.600-2.400 5.600-4.400s2.200-3.600 5.200-4" fill="none" stroke="#dadada" stroke-width="1.100"/></svg>
<svg class="i" style="left:905.9px;top:231.3px;" width="12.4" height="10" viewBox="0 0 12.4 10"><rect x=".5" y=".5" width="11.400" height="9" fill="none" stroke="#dadada" stroke-width="1"/><path d="M11.600 .8l-10.800 8.400h10.800z" fill="#dadada" opacity=".55"/><path d="M2 3.200h2.800M3.400 1.800v2.800M7.600 7h2.800" stroke="#dadada" stroke-width=".9"/></svg>
<svg class="i" style="left:923.0px;top:231.3px;" width="12.4" height="10" viewBox="0 0 12.4 10"><path d="M1 .8h10.400l-5.200 8.600z" fill="none" stroke="#dadada" stroke-width="1.200" stroke-linejoin="round"/><path d="M3.400 2.400h5.600l-2.800 4.600z" fill="#dadada" opacity=".35"/></svg>
<svg class="i" style="left:844.5px;top:251.2px;" width="12.4" height="10" viewBox="0 0 12.4 10"><rect x=".5" y=".5" width="11.400" height="9" fill="none" stroke="#dadada" stroke-width="1"/><rect x="1.400" y="1.400" width="9.600" height="2.800" fill="#dadada"/><path d="M3.400 1.400v2.800M5.400 1.400v2.800M7.400 1.400v2.800M9.400 1.400v2.800" stroke="#535353" stroke-width=".7"/><defs><linearGradient id="ag1"><stop offset="0" stop-color="#444"/><stop offset="1" stop-color="#e0e0e0"/></linearGradient></defs><rect x="1.400" y="5.400" width="9.600" height="3.300" fill="url(#ag1)"/></svg>
<svg class="i" style="left:862.1px;top:251.2px;" width="12.4" height="10" viewBox="0 0 12.4 10"><path d="M6.200 .3v2M1.800 2.300c1.600-1 2.800-1 4.400 0c1.600-1 2.800-1 4.400 0" fill="none" stroke="#dadada" stroke-width=".9"/><circle cx="6.200" cy="1.200" r=".9" fill="#535353" stroke="#dadada" stroke-width=".7"/><path d="M2.800 2.500l-2.400 4.800h4.800zM9.600 2.500l-2.400 4.800h4.800z" fill="none" stroke="#dadada" stroke-width=".7"/><path d="M.2 7.200a2.600 2.600 0 0 0 5.200 0zM7 7.200a2.600 2.600 0 0 0 5.200 0z" fill="#dadada"/></svg>
<svg class="i" style="left:879.5px;top:251.2px;" width="12.4" height="10" viewBox="0 0 12.4 10"><rect x=".5" y=".5" width="11.400" height="9" fill="none" stroke="#dadada" stroke-width="1"/><rect x="6.200" y="1" width="5.200" height="8" fill="#dadada"/></svg>
<svg class="i" style="left:896.6px;top:251.2px;" width="12.4" height="10" viewBox="0 0 12.4 10"><path d="M.3 2h2.600l.8-1.300h3.600l.8 1.300h2.400v6.600h-10.200z" fill="#dadada"/><circle cx="5.400" cy="5.200" r="2.100" fill="#535353"/><circle cx="5.400" cy="5.200" r="1" fill="#dadada"/><circle cx="9.800" cy="8" r="2.200" fill="#535353" stroke="#dadada" stroke-width=".9"/></svg>
<svg class="i" style="left:914.5px;top:250.9px;" width="12.4" height="10.6" viewBox="0 0 12.4 10"><circle cx="6.200" cy="3.400" r="3.300" fill="#8a8a8a"/><circle cx="3.800" cy="6.900" r="3.300" fill="#c9c9c9"/><circle cx="8.600" cy="6.900" r="3.300" fill="#e2e2e2" opacity=".85"/><circle cx="6.200" cy="5.700" r="1.300" fill="#6a6a6a"/></svg>
<svg class="i" style="left:932.1px;top:251.2px;" width="12.4" height="10" viewBox="0 0 12.4 10"><rect x=".5" y=".5" width="11.400" height="9" fill="none" stroke="#dadada" stroke-width="1"/><path d="M3.400 .5v9M6.200 .5v9M9 .5v9M.5 3.400h11.400M.5 6.400h11.400" stroke="#dadada" stroke-width="1"/></svg>
<svg class="i" style="left:853.1px;top:271.0px;" width="12.4" height="10" viewBox="0 0 12.4 10"><rect x=".5" y=".5" width="11.400" height="9" fill="none" stroke="#dadada" stroke-width="1"/><path d="M.8 9.200v-8.400h10.800z" fill="#dadada" opacity=".5"/><ellipse cx="6.200" cy="5" rx="3.200" ry="2.200" transform="rotate(-38 6.200 5)" fill="#4a4a4a" stroke="#dadada" stroke-width=".8"/><path d="M3.700 7l5-4a3.200 2.200 -38 0 1 -5 4z" fill="#dadada"/></svg>
<svg class="i" style="left:870.7px;top:271.0px;" width="12.4" height="10" viewBox="0 0 12.4 10"><rect x=".5" y=".5" width="11.400" height="9" fill="none" stroke="#dadada" stroke-width="1"/><path d="M.8 6l5.600-5.200h3.200l-8.800 8.200zM4.200 9.200l7.400-6.800v3l-4.200 3.800z" fill="#dadada" opacity=".6"/></svg>
<svg class="i" style="left:888.5px;top:271.0px;" width="12.4" height="10" viewBox="0 0 12.4 10"><rect x=".5" y=".5" width="11.400" height="9" fill="none" stroke="#dadada" stroke-width="1"/><path d="M.8 9.200v-2.400l1.800-1.800 1.200 1 2-2.600 1.400 1 1.800-2.400 1.200.8 1.400-2v8.400z" fill="#dadada" opacity=".75"/><path d="M.8 6.600l1.800-1.800 1.200 1 2-2.600 1.400 1 1.800-2.400 1.200.8" fill="none" stroke="#3c3c3c" stroke-width="1.100"/></svg>
<svg class="i" style="left:905.9px;top:271.0px;" width="12.4" height="10" viewBox="0 0 12.4 10"><rect x=".5" y=".5" width="11.400" height="9" fill="none" stroke="#dadada" stroke-width="1"/><path d="M.8 .8l5.400 4.200 5.400-4.200z" fill="#dadada"/><path d="M.8 9.200l5.400-4.200 5.400 4.200z" fill="#dadada" opacity=".45"/><path d="M11.600 .8l-5.400 4.200 5.400 4.200z" fill="#dadada" opacity=".7"/></svg>
<svg class="i" style="left:923.3px;top:271.0px;" width="12.4" height="10" viewBox="0 0 12.4 10"><defs><linearGradient id="ag2"><stop offset="0" stop-color="#3c3c3c"/><stop offset="1" stop-color="#e6e6e6"/></linearGradient></defs><rect x=".5" y=".5" width="11.400" height="9" fill="url(#ag2)" stroke="#dadada" stroke-width="1"/></svg>
<div class="r" style="left:818px;top:291px;width:178px;height:21.4px;background:#424242;"></div>
<div class="r" style="left:818px;top:291px;width:32.4px;height:22px;background:#535353;"></div>
<div class="t " style="left:824.8px;top:294.80px;height:14px;font-size:9.4px;line-height:14px;--c:#e6e6e6;color:#e6e6e6;"><span class="c">图</span><span class="c">层</span></div>
<div class="r" style="left:850.4px;top:291px;width:32.4px;height:21.4px;background:#464646;box-shadow:inset -1px 0 0 #393939, inset 0 -1px 0 #393939"></div>
<div class="t " style="left:857px;top:294.80px;height:14px;font-size:9.4px;line-height:14px;--c:#a8a8a8;color:#a8a8a8;"><span class="c">通</span><span class="c">道</span></div>
<div class="r" style="left:882.8px;top:291px;width:32.8px;height:21.4px;background:#464646;box-shadow:inset -1px 0 0 #393939, inset 0 -1px 0 #393939"></div>
<div class="t " style="left:889.6px;top:294.80px;height:14px;font-size:9.4px;line-height:14px;--c:#a8a8a8;color:#a8a8a8;"><span class="c">路</span><span class="c">径</span></div>
<svg class="i" style="left:984px;top:299.6px;" width="8" height="5" viewBox="0 0 8 5"><path d="M0 .6h8M0 2.400h8M0 4.200h8" stroke="#8f8f8f" stroke-width="1.100"/></svg>
<div class="r" style="left:821px;top:319.2px;width:62.6px;height:13.4px;background:#424242;border-radius:2px;box-shadow:0 0 0 .6px #3a3a3a"></div>
<svg class="i" style="left:825.6px;top:321.6px;" width="8" height="8" viewBox="0 0 8 8"><circle cx="4.700" cy="3.200" r="2.300" fill="none" stroke="#e0e0e0" stroke-width="1.100"/><path d="M3.100 4.900L.8 7.400" stroke="#e0e0e0" stroke-width="1.300" stroke-linecap="round"/></svg>
<div class="t " style="left:836.6px;top:319.00px;height:14px;font-size:9.4px;line-height:14px;--c:#e4e4e4;color:#e4e4e4;"><span class="c">类</span><span class="c">型</span></div>
<svg class="i" style="left:875.4px;top:324.2px;" width="6.4" height="4.2" viewBox="0 0 6.4 4.2"><path d="M.6 .8L3.200 3.400 5.800 .8" fill="none" stroke="#c4c4c4" stroke-width="1"/></svg>
<svg class="i" style="left:894.8px;top:321.4px;" width="9.6" height="8.3" viewBox="0 0 10.4 9"><rect x=".5" y=".5" width="9.400" height="7.600" fill="none" stroke="#dcdcdc" stroke-width="1"/><path d="M1.800 6.800l2-2.800 1.400 1.600 1.400-2.400 2 3.600z" fill="#dcdcdc"/></svg>
<svg class="i" style="left:913px;top:321.6px;" width="8.8" height="8.8" viewBox="0 0 9.4 9.4"><circle cx="4.700" cy="4.700" r="4" fill="none" stroke="#dcdcdc" stroke-width="1"/><path d="M7.600 1.900a4 4 0 0 1 -5.700 5.700z" fill="#dcdcdc"/></svg>
<div class="t " style="left:931.4px;top:318.80px;height:14px;font-size:10.6px;line-height:14px;--c:#dcdcdc;color:#dcdcdc;font-family:'Liberation Serif',serif;font-weight:bold">T</div>
<svg class="i" style="left:947.6px;top:321.4px;" width="9.2" height="9.2" viewBox="0 0 10 10"><rect x="1.700" y="1.700" width="6.600" height="6.600" fill="none" stroke="#dcdcdc" stroke-width="1"/><path d="M.3 .3h2.600v2.600h-2.600zM7.100 .3h2.600v2.600h-2.600zM.3 7.100h2.600v2.600h-2.600zM7.100 7.100h2.600v2.600h-2.600z" fill="#dcdcdc"/></svg>
<svg class="i" style="left:966px;top:321px;" width="8.2" height="10" viewBox="0 0 9 11"><path d="M2.400 3.600v-2.800h3.400l2.400 2.400v6.800h-3" fill="none" stroke="#dcdcdc" stroke-width="1"/><path d="M5.600 .8v2.600h2.600" fill="none" stroke="#dcdcdc" stroke-width=".8"/><rect x=".3" y="4.600" width="4.800" height="5.800" fill="#dcdcdc"/></svg>
<div class="r" style="left:987.4px;top:319.4px;width:5.4px;height:13px;background:#464646;border-radius:2.700px;box-shadow:0 0 0 .6px #3a3a3a"></div>
<div class="r" style="left:987.4px;top:318.600px;width:5.400px;height:5.400px;border-radius:50%;background:#e2e2e2"></div>
<div class="r" style="left:821px;top:339.2px;width:85px;height:13.4px;background:#424242;border-radius:2px;box-shadow:0 0 0 .6px #3a3a3a"></div>
<div class="t " style="left:826.8px;top:339.00px;height:14px;font-size:9.4px;line-height:14px;--c:#e4e4e4;color:#e4e4e4;"><span class="c">正</span><span class="c">常</span></div>
<svg class="i" style="left:897.6px;top:344.2px;" width="6.4" height="4.2" viewBox="0 0 6.4 4.2"><path d="M.6 .8L3.200 3.400 5.800 .8" fill="none" stroke="#c4c4c4" stroke-width="1"/></svg>
<div class="t " style="left:912.6px;top:339.00px;height:14px;font-size:9.4px;line-height:14px;--c:#d2d2d2;color:#d2d2d2;letter-spacing:-.35px"><span class="c">不</span><span class="c">透</span><span class="c">明</span><span class="c">度</span>:</div>
<div class="r" style="left:954px;top:339.2px;width:27px;height:13.4px;background:#424242;border-radius:2px 0 0 2px;box-shadow:0 0 0 .6px #3a3a3a"></div>
<div class="t " style="left:955.6px;top:339.00px;height:14px;font-size:9.4px;line-height:14px;--c:#e4e4e4;color:#e4e4e4;">100%</div>
<div class="r" style="left:983.2px;top:339.2px;width:9.6px;height:13.4px;background:#424242;border-radius:0 2px 2px 0;box-shadow:0 0 0 .6px #3a3a3a"></div>
<svg class="i" style="left:984.8px;top:344.2px;" width="6.4" height="4.2" viewBox="0 0 6.4 4.2"><path d="M.6 .8L3.200 3.400 5.800 .8" fill="none" stroke="#c4c4c4" stroke-width="1"/></svg>
<div class="t " style="left:822.4px;top:358.80px;height:14px;font-size:9.4px;line-height:14px;--c:#c9c9c9;color:#c9c9c9;"><span class="c">锁</span><span class="c">定</span>:</div>
<svg class="i" style="left:849.4px;top:361.4px;" width="9" height="9" viewBox="0 0 9 9"><rect x=".4" y=".4" width="8.200" height="8.200" fill="#e6e6e6"/><path d="M.4 .4h2.050v2.050h-2.050zM4.500 .4h2.050v2.050h-2.050zM2.450 2.450h2.050v2.050h-2.050zM6.550 2.450h2.050v2.050h-2.050zM.4 4.500h2.050v2.050h-2.050zM4.500 4.500h2.050v2.050h-2.050zM2.450 6.550h2.050v2.050h-2.050zM6.550 6.550h2.050v2.050h-2.050z" fill="#3c3c3c"/></svg>
<svg class="i" style="left:864.6px;top:360.6px;" width="11" height="11" viewBox="0 0 11 11"><path d="M9.600 .6c.6-.5 1.200.1 .8.700l-4.600 5.800-1.200-1.100zM4 6.400c-1.300-.4-2.300.5-2.400 1.700c0 .8-.6 1.300-1.400 1.500c2.200 1 4.400-.2 4.800-2.200z" fill="#dcdcdc"/></svg>
<svg class="i" style="left:880.6px;top:360.6px;" width="10.4" height="10.4" viewBox="0 0 10.4 10.4"><path d="M5.200 1.600v7.200M1.600 5.200h7.200" stroke="#dcdcdc" stroke-width="1.100"/><path d="M5.200 .1l1.800 2.100h-3.600zM5.200 10.300l1.800-2.100h-3.600zM.1 5.200l2.100-1.800v3.600zM10.300 5.200l-2.100-1.800v3.600z" fill="#dcdcdc"/></svg>
<svg class="i" style="left:896.2px;top:360.4px;" width="11.4" height="11" viewBox="0 0 11.4 11"><path d="M3 .4v7.800h8M.2 3h7.800v7.800" fill="none" stroke="#dcdcdc" stroke-width="1.100"/><path d="M8.600 2.200l2.200-2" stroke="#dcdcdc" stroke-width=".9"/></svg>
<svg class="i" style="left:914px;top:360.2px;" width="8.4" height="11" viewBox="0 0 8.4 11"><path d="M2 5v-1.800a2.200 2.200 0 0 1 4.400 0v1.800" fill="none" stroke="#dcdcdc" stroke-width="1.200"/><rect x=".4" y="4.800" width="7.600" height="5.800" rx=".6" fill="#dcdcdc"/><rect x="3.700" y="6.600" width="1" height="2.200" fill="#535353"/></svg>
<div class="t " style="left:930.4px;top:358.80px;height:14px;font-size:9.4px;line-height:14px;--c:#d2d2d2;color:#d2d2d2;"><span class="c">填</span><span class="c">充</span>:</div>
<div class="r" style="left:954px;top:359.2px;width:27px;height:13.4px;background:#424242;border-radius:2px 0 0 2px;box-shadow:0 0 0 .6px #3a3a3a"></div>
<div class="t " style="left:955.6px;top:359.00px;height:14px;font-size:9.4px;line-height:14px;--c:#e4e4e4;color:#e4e4e4;">100%</div>
<div class="r" style="left:983.2px;top:359.2px;width:9.6px;height:13.4px;background:#424242;border-radius:0 2px 2px 0;box-shadow:0 0 0 .6px #3a3a3a"></div>
<svg class="i" style="left:984.8px;top:364.2px;" width="6.4" height="4.2" viewBox="0 0 6.4 4.2"><path d="M.6 .8L3.200 3.400 5.800 .8" fill="none" stroke="#c4c4c4" stroke-width="1"/></svg>
<div class="r" style="left:818px;top:376.4px;width:167px;height:85.4px;background:#4d4d4d;"></div>
<div class="r" style="left:818px;top:376.4px;width:21.6px;height:85.4px;background:#525252;"></div>
<div class="r" style="left:839.4px;top:376.4px;width:0.8px;height:85.4px;background:#464646;"></div>
<div class="r" style="left:818px;top:376px;width:167px;height:0.8px;background:#464646;"></div>
<div class="r" style="left:840.2px;top:376.8px;width:137px;height:28.4px;background:#6b6b6b;"></div>
<div class="r" style="left:977.2px;top:376.8px;width:7.8px;height:28.4px;background:#5c5c5c;"></div>
<div class="r" style="left:818px;top:432.4px;width:167px;height:0.9px;background:#444;"></div>
<div class="r" style="left:818px;top:461.4px;width:167px;height:0.9px;background:#444;"></div>
<div class="r" style="left:818px;top:462.3px;width:167px;height:56px;background:#545454;"></div>
<svg class="i" style="left:823.8px;top:387.6px;" width="10.2" height="6.8" viewBox="0 0 10.2 6.8"><path d="M.4 3.400c2.400-3.800 7-3.800 9.400 0c-2.400 3.800-7 3.800-9.400 0z" fill="#e8e8e8"/><circle cx="5.100" cy="3.400" r="1.900" fill="#525252"/><circle cx="5.100" cy="3.400" r="1" fill="#e8e8e8"/></svg>
<svg class="i" style="left:823.8px;top:443.8px;" width="10.2" height="6.8" viewBox="0 0 10.2 6.8"><path d="M.4 3.400c2.400-3.800 7-3.800 9.400 0c-2.400 3.800-7 3.800-9.400 0z" fill="#e8e8e8"/><circle cx="5.100" cy="3.400" r="1.900" fill="#525252"/><circle cx="5.100" cy="3.400" r="1" fill="#e8e8e8"/></svg>
<svg class="i" style="left:866.6px;top:422.8px;" width="9.6" height="6.4" viewBox="0 0 10.2 6.8"><path d="M.4 3.400c2.400-3.800 7-3.800 9.400 0c-2.400 3.800-7 3.800-9.400 0z" fill="#a9a9a9"/><circle cx="5.100" cy="3.400" r="1.900" fill="#4d4d4d"/><circle cx="5.100" cy="3.400" r="1" fill="#a9a9a9"/></svg>
<div class="r" style="left:842.4px;top:378.8px;width:24.3px;height:23.7px;background:#353535;"></div>
<div class="r" style="left:843.4px;top:379.800px;width:22.300px;height:21.700px;background:#fff;background-image:linear-gradient(45deg,#d4d4d4 25%,transparent 25%,transparent 75%,#d4d4d4 75%),linear-gradient(45deg,#d4d4d4 25%,transparent 25%,transparent 75%,#d4d4d4 75%);background-size:5.600px 5.600px;background-position:0 0,2.800px 2.800px"></div>
<svg class="i" style="left:843.4px;top:379.8px;" width="22.3" height="21.7" viewBox="0 0 22.3 21.7"><path d="M4.600 6.100h12.900v8h-2.500v-7h-7.900v7h-2.500z" fill="#1c1c1c"/><rect x="7.100" y="7" width="8" height="7.600" fill="#fff"/></svg>
<svg class="i" style="left:840.9px;top:377.2px;" width="27.2" height="27" viewBox="0 0 27.2 27"><path d="M.5 8.500v-8h8M18.700 .5h8v8M26.700 18.500v8h-8M8.500 26.500h-8v-8" fill="none" stroke="#f4f4f4" stroke-width="1.100"/></svg>
<div class="t " style="left:872.6px;top:384.20px;height:14px;font-size:9.4px;line-height:14px;--c:#ececec;color:#ececec;"><span class="c">图</span><span class="c">层</span>&nbsp;1</div>
<div class="t " style="left:966.6px;top:384.00px;height:14px;font-size:10.5px;line-height:14px;--c:#e4e4e4;color:#e4e4e4;font-style:italic;font-family:'Liberation Serif',serif;letter-spacing:-.3px">fx</div>
<svg class="i" style="left:977.6px;top:388.8px;" width="6.4" height="4.2" viewBox="0 0 6.4 4.2"><path d="M.6 3.400L3.200 .8 5.800 3.400" fill="none" stroke="#d0d0d0" stroke-width="1"/></svg>
<div class="t " style="left:867.6px;top:405.20px;height:14px;font-size:9.4px;line-height:14px;--c:#dedede;color:#dedede;"><span class="c">效</span><span class="c">果</span></div>
<div class="t " style="left:881px;top:420.00px;height:14px;font-size:9.4px;line-height:14px;--c:#dedede;color:#dedede;"><span class="c">描</span><span class="c">边</span></div>
<div class="r" style="left:843.2px;top:436px;width:22.4px;height:22.4px;background:#fff;"></div>
<div class="t " style="left:872.6px;top:440.20px;height:14px;font-size:9.4px;line-height:14px;--c:#e6e6e6;color:#e6e6e6;"><span class="c">背</span><span class="c">景</span></div>
<svg class="i" style="left:965px;top:441.8px;" width="8" height="10.6" viewBox="0 0 8 10.6"><path d="M2 5v-1.800a2 2 0 0 1 4 0v1.800" fill="none" stroke="#e2e2e2" stroke-width="1"/><rect x=".9" y="4.900" width="6.200" height="5" rx=".6" fill="none" stroke="#e2e2e2" stroke-width="1"/><rect x="3.600" y="6.400" width=".9" height="2" fill="#e2e2e2"/></svg>
<div class="r" style="left:818px;top:518.3px;width:182px;height:0.8px;background:#444;"></div>
<svg class="i" style="left:846.4px;top:516.4px;" width="11" height="8" viewBox="0 0 11 8"><rect x=".5" y="1.500" width="5.600" height="5" rx="2.500" fill="none" stroke="#cfcfcf" stroke-width="1"/><rect x="4.900" y="1.500" width="5.600" height="5" rx="2.500" fill="none" stroke="#cfcfcf" stroke-width="1"/></svg>
<div class="t " style="left:868px;top:513.40px;height:14px;font-size:10.5px;line-height:14px;--c:#cfcfcf;color:#cfcfcf;font-style:italic;font-family:'Liberation Serif',serif;letter-spacing:-.3px">fx</div>
<svg class="i" style="left:886.6px;top:515.8px;" width="10.4" height="9.6" viewBox="0 0 10.4 9.6"><rect x=".5" y=".5" width="9.400" height="8.600" fill="#cfcfcf"/><circle cx="5.200" cy="4.800" r="2.500" fill="#535353"/></svg>
<svg class="i" style="left:907.8px;top:515.8px;" width="9.6" height="9.6" viewBox="0 0 9.6 9.6"><circle cx="4.800" cy="4.800" r="4.200" fill="none" stroke="#cfcfcf" stroke-width="1"/><path d="M7.800 1.800a4.200 4.200 0 0 1 -6 6z" fill="#cfcfcf"/></svg>
<svg class="i" style="left:926.6px;top:516px;" width="11" height="9" viewBox="0 0 11 9"><path d="M.4 1.200h3.800l1 1.300h5.400v6.200h-10.200z" fill="#cfcfcf"/></svg>
<svg class="i" style="left:947px;top:515.6px;" width="9.6" height="10" viewBox="0 0 9.6 10"><path d="M.5 .5h8.600v6l-2.800 3h-5.800z" fill="none" stroke="#cfcfcf" stroke-width="1"/><path d="M9.100 6.500h-2.800v3" fill="none" stroke="#cfcfcf" stroke-width="1"/></svg>
<svg class="i" style="left:966.2px;top:515.2px;" width="8.6" height="10.6" viewBox="0 0 8.6 10.6"><path d="M.2 2h8.200M3 1.800v-1.300h2.600v1.300" fill="none" stroke="#cfcfcf" stroke-width="1"/><path d="M1 3h6.600l-.5 7.300h-5.600z" fill="#cfcfcf"/><path d="M3 4.400v4.600M5.600 4.400v4.600" stroke="#535353" stroke-width=".7"/></svg>
<div class="r" style="left:0;top:533px;width:1000px;height:30px;background:linear-gradient(90deg,#0b0b0b 0%,#0f0e0e 22%,#1a1513 42%,#2a201a 60%,#241c17 72%,#181412 86%,#101010 100%)"></div>
<svg class="i" style="left:11.4px;top:542.2px;" width="12.6" height="12.4" viewBox="0 0 12.6 12.4"><path d="M0 1.800l5.200-.8v5h-5.200zM5.900 .9l6.700-.9v6h-6.700zM0 6.700h5.200v5l-5.200-.8zM5.900 6.700h6.700v5.700l-6.700-.9z" fill="#fff"/></svg>
<svg class="i" style="left:46px;top:541.8px;" width="13.4" height="13.4" viewBox="0 0 13.4 13.4"><circle cx="6.700" cy="6.700" r="5.200" fill="none" stroke="#fff" stroke-width="1.700"/></svg>
<svg class="i" style="left:81.2px;top:542.6px;" width="13" height="11.2" viewBox="0 0 13 11.2"><rect x="1.700" y="2.400" width="6.800" height="6.400" fill="none" stroke="#fff" stroke-width="1.200"/><path d="M.6 .6v10M9.600 .6v10" stroke="#fff" stroke-width="1.100"/><path d="M12 .6v3M12 6.600v4" stroke="#fff" stroke-width="1"/><circle cx="12" cy="5" r=".9" fill="#fff"/></svg>
<div class="r" style="left:146px;top:561px;width:29px;height:2px;background:#76b9ed;"></div>
<div class="r" style="left:254px;top:561px;width:28.5px;height:2px;background:#76b9ed;"></div>
<div class="r" style="left:260px;top:553px;width:12px;height:3px;background:#d24726;border-radius:0 0 2px 2px"></div>
<div class="r" style="left:220px;top:553px;width:14px;height:2.5px;background:#2b579a;border-radius:0 0 2px 2px"></div>
<svg class="i" style="left:295.4px;top:540.4px;" width="17.6" height="16" viewBox="0 0 17.6 16"><rect x="7" y="1" width="10.200" height="14" fill="#fff" stroke="#1e7145" stroke-width=".8"/><path d="M9 3.500h7M9 6h7M9 8.500h7M9 11h7M12.600 1.500v13" stroke="#1e7145" stroke-width="1"/><path d="M0 1.600l10-1.600v16l-10-1.600z" fill="#1e7145"/><path d="M2.600 4.800l4.600 6.400M7.200 4.800l-4.600 6.400" stroke="#fff" stroke-width="1.500"/></svg>
<svg class="i" style="left:332.4px;top:540.4px;" width="15.8" height="15.8" viewBox="0 0 15.8 15.8"><circle cx="7.900" cy="7.900" r="7.600" fill="#dfe6ee"/><circle cx="7.900" cy="7.900" r="6.400" fill="#1d4e85"/><circle cx="7.900" cy="7.900" r="6.400" fill="none" stroke="#0f2c52" stroke-width=".8"/></svg>
<div class="t " style="left:335.4px;top:541.40px;height:14px;font-size:6.8px;line-height:14px;--c:#fff;color:#fff;font-weight:bold;letter-spacing:-.3px">EN</div>
<svg class="i" style="left:367.4px;top:539.6px;" width="18.4" height="17.4" viewBox="0 0 18.4 17.4"><ellipse cx="9" cy="6.600" rx="8.400" ry="5.200" transform="rotate(-18 9 6.600)" fill="#f3f3f3" stroke="#c23a3a" stroke-width="1.800"/><ellipse cx="6.400" cy="12" rx="4.600" ry="1.800" fill="#9aa0a8" opacity=".8"/><path d="M8 4.500l5.600 9M12.200 4.500l-3 8.400" stroke="#5c6670" stroke-width="1"/><circle cx="9.200" cy="14.600" r="1.700" fill="none" stroke="#1f7ed0" stroke-width="1.300"/><circle cx="14" cy="14.800" r="1.700" fill="none" stroke="#1f7ed0" stroke-width="1.300"/></svg>
<svg class="i" style="left:403px;top:540.4px;" width="17.6" height="16" viewBox="0 0 17.6 16"><rect x="7" y="1" width="10.200" height="14" fill="#fff" stroke="#80397b" stroke-width=".8"/><path d="M13.500 3.500h3.500M13.500 6.500h3.500M13.500 9.500h3.500M13.500 12.500h3.500" stroke="#80397b" stroke-width="1.500"/><path d="M0 1.600l10-1.600v16l-10-1.600z" fill="#80397b"/><path d="M2.900 11.400v-6.600l4.200 6.600v-6.600" fill="none" stroke="#fff" stroke-width="1.500"/></svg>
<div class="r" style="left:430.6px;top:533px;width:35px;height:30px;background:#484848;"></div>
<div class="r" style="left:430.6px;top:561px;width:35px;height:2px;background:#76b9ed;"></div>
<div class="r" style="left:439.8px;top:539.8px;width:16.8px;height:16.2px;background:#0b1f2e;box-shadow:inset 0 0 0 1.300px #31c5f0"></div>
<div class="t " style="left:442.2px;top:541.20px;height:14px;font-size:9.8px;line-height:14px;--c:#31c5f0;color:#31c5f0;font-weight:bold;letter-spacing:-.2px">Ps</div>
<svg class="i" style="left:474.6px;top:539.6px;" width="17.6" height="17.4" viewBox="0 0 17.6 17.4"><rect x="6.500" y=".8" width="10.500" height="12" fill="#dfe7f3" stroke="#7f97c4" stroke-width=".7"/><path d="M8 4h8M8 7h8M8 10h8M10.500 1v11.500M13.500 1v11.500" stroke="#a9bbdd" stroke-width=".6"/><circle cx="8" cy="9.400" r="7.600" fill="#e25a2f"/><circle cx="8" cy="9.400" r="7.600" fill="none" stroke="#f2a17a" stroke-width=".8"/><path d="M2.600 12.500c1.600-.3 2.400-2 3.300-4.500c.9-2.400 1.600-2.800 2.400-.4c.8 2.500 1.800 4.200 4.400 4.600" fill="none" stroke="#fff" stroke-width="1"/><path d="M3 10.500h10M8 3.500v11" stroke="#f6c9b4" stroke-width=".5"/></svg>
<div class="r" style="left:511.2px;top:539.8px;width:17.4px;height:17.2px;background:#e01e22;border-radius:3px"></div>
<div class="t " style="left:513px;top:541.40px;height:14px;font-size:7.4px;line-height:14px;--c:#fff;color:#fff;letter-spacing:-.2px"><span class="c">有</span><span class="c">道</span></div>
<svg class="i" style="left:736.4px;top:541.6px;" width="12.4" height="12.6" viewBox="0 0 12.4 12.6"><circle cx="8.400" cy="2.600" r="2" fill="none" stroke="#f2f2f2" stroke-width="1"/><path d="M5.400 9.400c0-5 6-5 6 0" fill="none" stroke="#f2f2f2" stroke-width="1"/><circle cx="3.800" cy="6" r="2" fill="#181412" stroke="#f2f2f2" stroke-width="1"/><path d="M.7 12.400c0-5 6.200-5 6.200 0" fill="none" stroke="#f2f2f2" stroke-width="1"/></svg>
<svg class="i" style="left:764.6px;top:545.4px;" width="8.8" height="5.4" viewBox="0 0 8.8 5.4"><path d="M.6 4.800l3.800-3.800 3.800 3.800" fill="none" stroke="#fff" stroke-width="1.200"/></svg>
<svg class="i" style="left:780.6px;top:542.2px;" width="10.6" height="12" viewBox="0 0 10.6 12"><path d="M5.300 .4c-2.400 0-3.600 1.800-3.600 4.200c0 2.400-.6 3.400-1.500 4.400h10.200c-.9-1-1.500-2-1.500-4.400c0-2.400-1.200-4.200-3.600-4.200z" fill="#fff"/><path d="M3.800 9.800a1.500 1.500 0 0 0 3 0z" fill="#fff"/></svg>
<svg class="i" style="left:797px;top:541.6px;" width="13" height="13" viewBox="0 0 13 13"><circle cx="6.500" cy="6.500" r="6.200" fill="#37a32f"/><circle cx="6.500" cy="6.500" r="6.200" fill="none" stroke="#7fd06a" stroke-width=".7"/><ellipse cx="5.600" cy="5.400" rx="4.400" ry="3.200" fill="#e9d92c"/><path d="M3 5.400h5.200M5.600 3.200v4.400" stroke="#2d7f22" stroke-width="1.500"/></svg>
<svg class="i" style="left:815.6px;top:542.4px;" width="12" height="11.6" viewBox="0 0 12 11.6"><path d="M.6 11.200a10.800 10.800 0 0 1 10.800-10.800" fill="none" stroke="#cfcfcf" stroke-width="1"/><path d="M3.400 11.200a8 8 0 0 1 8-8" fill="none" stroke="#e4e4e4" stroke-width="1"/><path d="M6.200 11.200a5.200 5.200 0 0 1 5.200-5.200" fill="none" stroke="#fff" stroke-width="1.100"/><path d="M8.600 11.400a2.800 2.800 0 0 1 2.800-2.800v2.800z" fill="#fff"/></svg>
<svg class="i" style="left:832.6px;top:542.8px;" width="13" height="10.8" viewBox="0 0 13 10.8"><path d="M.5 3.600h2.300l3-2.800v9.200l-3-2.800h-2.300z" fill="none" stroke="#fff" stroke-width="1"/><path d="M7.600 3.400c.9 1.200.9 2.800 0 4M9.400 2c1.600 2 1.600 4.800 0 6.800M11.200 .8c2.200 2.800 2.200 6.400 0 9.200" fill="none" stroke="#fff" stroke-width=".9"/></svg>
<svg class="i" style="left:849.6px;top:543.6px;" width="14.4" height="9.6" viewBox="0 0 14.4 9.6"><path d="M1 1.400v2.200M.1 2.500h1.900" stroke="#fff" stroke-width=".7"/><rect x="2.800" y="2" width="9.600" height="5.800" fill="none" stroke="#fff" stroke-width="1"/><rect x="12.600" y="3.600" width="1.200" height="2.600" fill="#fff"/><rect x="4" y="3.200" width="4.600" height="3.400" fill="#fff"/></svg>
<div class="t " style="left:868.4px;top:541.20px;height:14px;font-size:11.2px;line-height:14px;--c:#fff;color:#fff;font-size:11.2px"><span class="c">英</span></div>
<div class="r" style="left:890.2px;top:543.4px;width:9.2px;height:9.8px;background:#fff;"></div>
<div class="t " style="left:890.9px;top:541.50px;height:14px;font-size:9.2px;line-height:14px;--c:#000;color:#000;font-weight:bold;letter-spacing:-.4px">M</div>
<div class="t " style="left:924.2px;top:534.20px;height:14px;font-size:9.4px;line-height:14px;--c:#fff;color:#fff;">20:18</div>
<div class="t " style="left:913.4px;top:548.20px;height:14px;font-size:9.4px;line-height:14px;--c:#fff;color:#fff;">2018/10/2</div>
<svg class="i" style="left:969.8px;top:542.4px;" width="12.6" height="12.6" viewBox="0 0 12.6 12.6"><path d="M.6 .6h11.400v8.400h-3.400l-2.300 2.800-2.300-2.800h-3.400z" fill="none" stroke="#fff" stroke-width="1.100" stroke-linejoin="round"/></svg>
<div class="r" style="left:122.6px;top:553px;width:14.4px;height:3px;background:#e8e8e8;border-radius:0 0 2px 2px;opacity:.9"></div>
<div class="r" style="left:154px;top:553px;width:10px;height:3px;background:#2a6fc9;border-radius:0 0 2px 2px"></div>
<svg class="i" style="left:190px;top:553px;" width="16" height="5" viewBox="0 0 16 5"><path d="M1 0a7 4.200 0 0 0 14 0" fill="none" stroke="#3fae49" stroke-width="1.600"/></svg>
<div class="r" style="left:290.6px;top:195px;width:234.4px;height:178.4px;background:#272727;"></div>
<div class="r" style="left:290.6px;top:195px;width:234.4px;height:8px;background:#4f4f4f;"></div>
<div class="r" style="left:290.6px;top:203px;width:234.4px;height:8px;background:#4b4b4b;"></div>
<div class="r" style="left:290.6px;top:202.7px;width:234.4px;height:0.6px;background:#434343;"></div>
<div class="r" style="left:290.6px;top:211px;width:234.4px;height:7.4px;background:#3e3e3e;"></div>
<div class="r" style="left:290.6px;top:211.4px;width:10.4px;height:7px;background:#4a4a4a;"></div>
<div class="r" style="left:311.8px;top:220.6px;width:144.6px;height:145px;background:#fff;"></div>
<div class="r" style="left:512.6px;top:218.4px;width:5.2px;height:147px;background:#3e3e3e;"></div>
<div class="r" style="left:517.8px;top:214px;width:7.2px;height:151.4px;background:#4c4c4c;"></div>
<div class="r" style="left:290.6px;top:367.6px;width:234.4px;height:5.8px;background:#454545;"></div>
<div class="r" style="left:290.6px;top:367.6px;width:12px;height:5.8px;background:#4e4e4e;"></div>
<div class="r" style="left:293px;top:197.7px;width:8.5px;height:2.2px;background:#b4b4b4;opacity:0.55;border-radius:.6px;filter:blur(.35px)"></div>
<div class="r" style="left:305.5px;top:197.7px;width:9.0px;height:2.2px;background:#b4b4b4;opacity:0.55;border-radius:.6px;filter:blur(.35px)"></div>
<div class="r" style="left:319px;top:197.7px;width:10px;height:2.2px;background:#b4b4b4;opacity:0.55;border-radius:.6px;filter:blur(.35px)"></div>
<div class="r" style="left:332.5px;top:197.7px;width:9.0px;height:2.2px;background:#b4b4b4;opacity:0.55;border-radius:.6px;filter:blur(.35px)"></div>
<div class="r" style="left:345px;top:197.7px;width:9.5px;height:2.2px;background:#b4b4b4;opacity:0.55;border-radius:.6px;filter:blur(.35px)"></div>
<div class="r" style="left:358px;top:197.7px;width:7.5px;height:2.2px;background:#b4b4b4;opacity:0.55;border-radius:.6px;filter:blur(.35px)"></div>
<div class="r" style="left:370px;top:197.7px;width:8.5px;height:2.2px;background:#b4b4b4;opacity:0.55;border-radius:.6px;filter:blur(.35px)"></div>
<div class="r" style="left:383px;top:197.7px;width:10px;height:2.2px;background:#b4b4b4;opacity:0.55;border-radius:.6px;filter:blur(.35px)"></div>
<div class="r" style="left:397px;top:197.7px;width:8.5px;height:2.2px;background:#b4b4b4;opacity:0.55;border-radius:.6px;filter:blur(.35px)"></div>
<div class="r" style="left:294.5px;top:206.3px;width:6.5px;height:2.6px;background:#b8b8b8;opacity:0.6000000000000001;border-radius:.6px;filter:blur(.35px)"></div>
<div class="r" style="left:305px;top:206.3px;width:1px;height:2.6px;background:#b8b8b8;opacity:0.30000000000000004;border-radius:.6px;filter:blur(.35px)"></div>
<div class="r" style="left:311.5px;top:206.3px;width:2.0px;height:2.6px;background:#b8b8b8;opacity:0.375;border-radius:.6px;filter:blur(.35px)"></div>
<div class="r" style="left:316px;top:206.3px;width:17px;height:2.6px;background:#b8b8b8;opacity:0.6375;border-radius:.6px;filter:blur(.35px)"></div>
<div class="r" style="left:340.5px;top:206.3px;width:2.5px;height:2.6px;background:#b8b8b8;opacity:0.44999999999999996;border-radius:.6px;filter:blur(.35px)"></div>
<div class="r" style="left:346.5px;top:206.3px;width:2.5px;height:2.6px;background:#b8b8b8;opacity:0.44999999999999996;border-radius:.6px;filter:blur(.35px)"></div>
<div class="r" style="left:353px;top:206.3px;width:3px;height:2.6px;background:#b8b8b8;opacity:0.44999999999999996;border-radius:.6px;filter:blur(.35px)"></div>
<div class="r" style="left:361px;top:206.3px;width:3px;height:2.6px;background:#b8b8b8;opacity:0.375;border-radius:.6px;filter:blur(.35px)"></div>
<div class="r" style="left:367.5px;top:206.3px;width:2.5px;height:2.6px;background:#b8b8b8;opacity:0.375;border-radius:.6px;filter:blur(.35px)"></div>
<div class="r" style="left:374px;top:206.3px;width:3px;height:2.6px;background:#b8b8b8;opacity:0.375;border-radius:.6px;filter:blur(.35px)"></div>
<div class="r" style="left:384px;top:206.3px;width:4px;height:2.6px;background:#b8b8b8;opacity:0.44999999999999996;border-radius:.6px;filter:blur(.35px)"></div>
<div class="r" style="left:390.5px;top:206.3px;width:3.5px;height:2.6px;background:#b8b8b8;opacity:0.44999999999999996;border-radius:.6px;filter:blur(.35px)"></div>
<div class="r" style="left:397px;top:206.3px;width:3.5px;height:2.6px;background:#b8b8b8;opacity:0.44999999999999996;border-radius:.6px;filter:blur(.35px)"></div>
<div class="r" style="left:405.5px;top:206.3px;width:2.5px;height:2.6px;background:#b8b8b8;opacity:0.44999999999999996;border-radius:.6px;filter:blur(.35px)"></div>
<div class="r" style="left:412px;top:206.3px;width:2.5px;height:2.6px;background:#b8b8b8;opacity:0.44999999999999996;border-radius:.6px;filter:blur(.35px)"></div>
<div class="r" style="left:418.5px;top:206.3px;width:2.5px;height:2.6px;background:#b8b8b8;opacity:0.44999999999999996;border-radius:.6px;filter:blur(.35px)"></div>
<div class="r" style="left:428.5px;top:206.3px;width:3.5px;height:2.6px;background:#b8b8b8;opacity:0.5249999999999999;border-radius:.6px;filter:blur(.35px)"></div>
<div class="r" style="left:438px;top:206.3px;width:10px;height:2.6px;background:#b8b8b8;opacity:0.22499999999999998;border-radius:.6px;filter:blur(.35px)"></div>
<div class="r" style="left:453.5px;top:206.3px;width:4.0px;height:2.6px;background:#b8b8b8;opacity:0.3375;border-radius:.6px;filter:blur(.35px)"></div>
<div class="r" style="left:459.5px;top:206.3px;width:4.0px;height:2.6px;background:#b8b8b8;opacity:0.3375;border-radius:.6px;filter:blur(.35px)"></div>
<div class="r" style="left:466px;top:206.3px;width:4px;height:2.6px;background:#b8b8b8;opacity:0.375;border-radius:.6px;filter:blur(.35px)"></div>
<div class="r" style="left:472px;top:206.3px;width:4px;height:2.6px;background:#b8b8b8;opacity:0.375;border-radius:.6px;filter:blur(.35px)"></div>
<div class="r" style="left:478.5px;top:206.3px;width:4.0px;height:2.6px;background:#b8b8b8;opacity:0.375;border-radius:.6px;filter:blur(.35px)"></div>
<div class="r" style="left:291.6px;top:213.9px;width:4px;height:2.2px;background:#aaa;opacity:0.6;border-radius:.6px;filter:blur(.35px)"></div>
<div class="r" style="left:296.6px;top:214.2px;width:1.6px;height:1.6px;background:#aaa;opacity:0.5;border-radius:.6px;filter:blur(.35px)"></div>
<div class="r" style="left:520.2px;top:219.4px;width:3.2px;height:2.8px;background:#d0d0d0;opacity:0.65;border-radius:.6px;filter:blur(.35px)"></div>
<div class="r" style="left:520.2px;top:229.4px;width:3.2px;height:2.8px;background:#d0d0d0;opacity:0.65;border-radius:.6px;filter:blur(.35px)"></div>
<div class="r" style="left:520.2px;top:239px;width:3.2px;height:2.8px;background:#d0d0d0;opacity:0.65;border-radius:.6px;filter:blur(.35px)"></div>
<div class="r" style="left:520.2px;top:246px;width:3.2px;height:2.8px;background:#d0d0d0;opacity:0.65;border-radius:.6px;filter:blur(.35px)"></div>
<div class="r" style="left:520.2px;top:254px;width:3.2px;height:2.8px;background:#d0d0d0;opacity:0.65;border-radius:.6px;filter:blur(.35px)"></div>
<div class="r" style="left:520.2px;top:261px;width:3.2px;height:2.8px;background:#d0d0d0;opacity:0.65;border-radius:.6px;filter:blur(.35px)"></div>
<div class="r" style="left:520.2px;top:272px;width:3.2px;height:2.8px;background:#d0d0d0;opacity:0.65;border-radius:.6px;filter:blur(.35px)"></div>
<div class="r" style="left:520.2px;top:282px;width:3.2px;height:2.8px;background:#d0d0d0;opacity:0.65;border-radius:.6px;filter:blur(.35px)"></div>
<div class="r" style="left:292px;top:369.4px;width:6px;height:2px;background:#aaa;opacity:0.5;border-radius:.6px;filter:blur(.35px)"></div>
<svg class="i" style="left:760px;top:450px" width="200" height="100" viewBox="760 450 200 100">
<defs><mask id="pm" maskUnits="userSpaceOnUse" x="820" y="450" width="80" height="70"><rect x="820" y="450" width="80" height="70" fill="#fff"/><text x="857.600" y="506.200" font-family="Liberation Sans, sans-serif" font-weight="bold" font-size="25" text-anchor="middle" textLength="27.400" lengthAdjust="spacingAndGlyphs" fill="#000" stroke="#000" stroke-width=".5">du</text></mask></defs>
<g opacity=".57" fill="#fff">
<text x="769.800" y="510" font-family="Liberation Sans, sans-serif" font-weight="bold" font-size="36" textLength="57" lengthAdjust="spacingAndGlyphs" stroke="#fff" stroke-width=".7">Bai</text>
<g mask="url(#pm)"><path d="M859 477.500C852.500 477.500 849 484 844 489C838.500 494 836 499.500 838 505C840.500 511.500 849 510.500 859 509.500C869 510.500 877.500 511.500 880 505C882 499.500 879.500 494 874 489C869 484 865.500 477.500 859 477.500Z"/>
<ellipse cx="836.800" cy="478.600" rx="5.500" ry="7.700" transform="rotate(-12 836.800 478.600)"/>
<ellipse cx="849.600" cy="465.800" rx="6" ry="8.900" transform="rotate(-4 849.600 465.800)"/>
<ellipse cx="864.800" cy="467.200" rx="6" ry="8.900" transform="rotate(8 864.800 467.200)"/>
<ellipse cx="876.400" cy="481.600" rx="5.400" ry="7.700" transform="rotate(18 876.400 481.600)"/></g>
<text x="884.600" y="509" font-family="Liberation Sans, Noto Sans CJK SC, sans-serif" font-weight="bold" font-size="29.5" textLength="59" lengthAdjust="spacingAndGlyphs">经验</text>
<text x="768.400" y="534.400" font-family="Liberation Sans, sans-serif" font-size="20" textLength="178.800" lengthAdjust="spacingAndGlyphs" stroke="#fff" stroke-width=".4">jingyan.baidu.com</text>
</g></svg>
<div class="r" style="left:985.600px;top:499.400px;width:31px;height:31px;border-radius:50%;background:radial-gradient(circle at 45% 40%,#59d06a 0%,#35b04c 60%,#2a9a40 100%);box-shadow:0 0 0 1.600px #e4f3e4, 0 0 0 2.400px rgba(120,120,120,.6)"></div>
<div class="t " style="left:989.6px;top:507.60px;height:14px;font-size:7.6px;line-height:14px;--c:#fff;color:#fff;font-weight:bold">43</div>
<div class="r" style="left:111px;top:0;width:179px;height:553px;background:#f0f0f0;box-shadow:1px 1px 3px 1px rgba(0,0,0,.55);border-left:1px solid #d9d9d9;box-sizing:border-box"></div>
<svg class="i" style="left:128.6px;top:7px;" width="7" height="4.2" viewBox="0 0 7 4.2"><path d="M0 4.1 L3.5 0.2 L7 4.1Z" fill="#959595"/></svg>
<div class="t " style="left:126.3px;top:17.00px;height:14px;font-size:9.6px;line-height:14px;--c:#141414;color:#141414;"><span class="c">重</span><span class="c">做</span><span class="c">启</span><span class="c">用</span><span class="c">图</span><span class="c">层</span><span class="c">效</span><span class="c">果</span><span class="k">(O)</span></div>
<div class="t " style="right:722.8px;top:17.00px;height:14px;font-size:9.6px;line-height:14px;--c:#141414;color:#141414;">Ctrl+Z</div>
<div class="t " style="left:126.3px;top:32.40px;height:14px;font-size:9.6px;line-height:14px;--c:#8b8b8b;color:#8b8b8b;"><span class="c">前</span><span class="c">进</span><span class="c">一</span><span class="c">步</span><span class="k">(W)</span></div>
<div class="t " style="right:722.8px;top:32.40px;height:14px;font-size:9.6px;line-height:14px;--c:#8b8b8b;color:#8b8b8b;">Shift+Ctrl+Z</div>
<div class="t " style="left:126.3px;top:47.80px;height:14px;font-size:9.6px;line-height:14px;--c:#141414;color:#141414;"><span class="c">后</span><span class="c">退</span><span class="c">一</span><span class="c">步</span><span class="k">(K)</span></div>
<div class="t " style="right:722.8px;top:47.80px;height:14px;font-size:9.6px;line-height:14px;--c:#141414;color:#141414;">Alt+Ctrl+Z</div>
<div class="r" style="left:114px;top:64.3px;width:174px;height:1px;background:#c9c9c9;"></div>
<div class="t " style="left:126.3px;top:69.60px;height:14px;font-size:9.6px;line-height:14px;--c:#8b8b8b;color:#8b8b8b;"><span class="c">渐</span><span class="c">隐</span><span class="k">(D)</span><span class="d">...</span></div>
<div class="t " style="right:722.8px;top:69.60px;height:14px;font-size:9.6px;line-height:14px;--c:#8b8b8b;color:#8b8b8b;">Shift+Ctrl+F</div>
<div class="r" style="left:114px;top:86.3px;width:174px;height:1px;background:#c9c9c9;"></div>
<div class="t " style="left:126.3px;top:91.80px;height:14px;font-size:9.6px;line-height:14px;--c:#8b8b8b;color:#8b8b8b;"><span class="c">剪</span><span class="c">切</span><span class="k">(T)</span></div>
<div class="t " style="right:722.8px;top:91.80px;height:14px;font-size:9.6px;line-height:14px;--c:#8b8b8b;color:#8b8b8b;">Ctrl+X</div>
<div class="t " style="left:126.3px;top:107.30px;height:14px;font-size:9.6px;line-height:14px;--c:#141414;color:#141414;"><span class="c">拷</span><span class="c">贝</span><span class="k">(C)</span></div>
<div class="t " style="right:722.8px;top:107.30px;height:14px;font-size:9.6px;line-height:14px;--c:#141414;color:#141414;">Ctrl+C</div>
<div class="t " style="left:126.3px;top:122.70px;height:14px;font-size:9.6px;line-height:14px;--c:#8b8b8b;color:#8b8b8b;"><span class="c">合</span><span class="c">并</span><span class="c">拷</span><span class="c">贝</span><span class="k">(Y)</span></div>
<div class="t " style="right:722.8px;top:122.70px;height:14px;font-size:9.6px;line-height:14px;--c:#8b8b8b;color:#8b8b8b;">Shift+Ctrl+C</div>
<div class="t " style="left:126.3px;top:138.10px;height:14px;font-size:9.6px;line-height:14px;--c:#141414;color:#141414;"><span class="c">粘</span><span class="c">贴</span><span class="k">(P)</span></div>
<div class="t " style="right:722.8px;top:138.10px;height:14px;font-size:9.6px;line-height:14px;--c:#141414;color:#141414;">Ctrl+V</div>
<div class="t " style="left:126.3px;top:153.50px;height:14px;font-size:9.6px;line-height:14px;--c:#141414;color:#141414;"><span class="c">选</span><span class="c">择</span><span class="c">性</span><span class="c">粘</span><span class="c">贴</span><span class="k">(I)</span></div>
<svg class="i" style="left:280px;top:155.7px;" width="4" height="6" viewBox="0 0 4 6"><path d="M0.3 0.3 L3.3 2.9 L0.3 5.5Z" fill="#111"/></svg>
<div class="t " style="left:126.3px;top:168.90px;height:14px;font-size:9.6px;line-height:14px;--c:#8b8b8b;color:#8b8b8b;"><span class="c">清</span><span class="c">除</span><span class="k">(E)</span></div>
<div class="r" style="left:114px;top:185.5px;width:174px;height:1px;background:#c9c9c9;"></div>
<div class="t " style="left:126.3px;top:191.00px;height:14px;font-size:9.6px;line-height:14px;--c:#141414;color:#141414;"><span class="c">搜</span><span class="c">索</span></div>
<div class="t " style="right:722.8px;top:191.00px;height:14px;font-size:9.6px;line-height:14px;--c:#141414;color:#141414;">Ctrl+F</div>
<div class="t " style="left:126.3px;top:206.30px;height:14px;font-size:9.6px;line-height:14px;--c:#141414;color:#141414;"><span class="c">拼</span><span class="c">写</span><span class="c">检</span><span class="c">查</span><span class="k">(H)</span><span class="d">...</span></div>
<div class="t " style="left:126.3px;top:221.70px;height:14px;font-size:9.6px;line-height:14px;--c:#141414;color:#141414;"><span class="c">查</span><span class="c">找</span><span class="c">和</span><span class="c">替</span><span class="c">换</span><span class="c">文</span><span class="c">本</span><span class="k">(X)</span><span class="d">...</span></div>
<div class="r" style="left:114px;top:238.1px;width:174px;height:1px;background:#c9c9c9;"></div>
<div class="t " style="left:126.3px;top:243.60px;height:14px;font-size:9.6px;line-height:14px;--c:#141414;color:#141414;"><span class="c">填</span><span class="c">充</span><span class="k">(L)</span><span class="d">...</span></div>
<div class="t " style="right:722.8px;top:243.60px;height:14px;font-size:9.6px;line-height:14px;--c:#141414;color:#141414;">Shift+F5</div>
<div class="r" style="left:113px;top:258.2px;width:175px;height:15.2px;background:#0a74d6;"></div>
<div class="t " style="left:126.3px;top:259.00px;height:14px;font-size:9.6px;line-height:14px;--c:#fff;color:#fff;"><span class="c">描</span><span class="c">边</span><span class="k">(S)</span><span class="d">...</span></div>
<div class="r" style="left:114px;top:275.7px;width:174px;height:1px;background:#c9c9c9;"></div>
<div class="t " style="left:126.3px;top:281.00px;height:14px;font-size:9.6px;line-height:14px;--c:#141414;color:#141414;"><span class="c">内</span><span class="c">容</span><span class="c">识</span><span class="c">别</span><span class="c">缩</span><span class="c">放</span></div>
<div class="t " style="right:722.8px;top:281.00px;height:14px;font-size:9.6px;line-height:14px;--c:#141414;color:#141414;">Alt+Shift+Ctrl+C</div>
<div class="t " style="left:126.3px;top:296.40px;height:14px;font-size:9.6px;line-height:14px;--c:#141414;color:#141414;"><span class="c">操</span><span class="c">控</span><span class="c">变</span><span class="c">形</span></div>
<div class="t " style="left:126.3px;top:311.80px;height:14px;font-size:9.6px;line-height:14px;--c:#141414;color:#141414;"><span class="c">透</span><span class="c">视</span><span class="c">变</span><span class="c">形</span></div>
<div class="t " style="left:126.3px;top:327.20px;height:14px;font-size:9.6px;line-height:14px;--c:#141414;color:#141414;"><span class="c">自</span><span class="c">由</span><span class="c">变</span><span class="c">换</span><span class="k">(F)</span></div>
<div class="t " style="right:722.8px;top:327.20px;height:14px;font-size:9.6px;line-height:14px;--c:#141414;color:#141414;">Ctrl+T</div>
<div class="t " style="left:126.3px;top:342.60px;height:14px;font-size:9.6px;line-height:14px;--c:#141414;color:#141414;"><span class="c">变</span><span class="c">换</span><span class="k">(A)</span></div>
<svg class="i" style="left:280px;top:344.8px;" width="4" height="6" viewBox="0 0 4 6"><path d="M0.3 0.3 L3.3 2.9 L0.3 5.5Z" fill="#111"/></svg>
<div class="t " style="left:126.3px;top:358.00px;height:14px;font-size:9.6px;line-height:14px;--c:#8b8b8b;color:#8b8b8b;"><span class="c">自</span><span class="c">动</span><span class="c">对</span><span class="c">齐</span><span class="c">图</span><span class="c">层</span><span class="d">...</span></div>
<div class="t " style="left:126.3px;top:373.40px;height:14px;font-size:9.6px;line-height:14px;--c:#8b8b8b;color:#8b8b8b;"><span class="c">自</span><span class="c">动</span><span class="c">混</span><span class="c">合</span><span class="c">图</span><span class="c">层</span><span class="d">...</span></div>
<div class="r" style="left:114px;top:390.1px;width:174px;height:1px;background:#c9c9c9;"></div>
<div class="t " style="left:126.3px;top:395.60px;height:14px;font-size:9.6px;line-height:14px;--c:#141414;color:#141414;"><span class="c">定</span><span class="c">义</span><span class="c">画</span><span class="c">笔</span><span class="c">预</span><span class="c">设</span><span class="k">(B)</span><span class="d">...</span></div>
<div class="t " style="left:126.3px;top:411.00px;height:14px;font-size:9.6px;line-height:14px;--c:#141414;color:#141414;"><span class="c">定</span><span class="c">义</span><span class="c">图</span><span class="c">案</span><span class="d">...</span></div>
<div class="t " style="left:126.3px;top:426.40px;height:14px;font-size:9.6px;line-height:14px;--c:#8b8b8b;color:#8b8b8b;"><span class="c">定</span><span class="c">义</span><span class="c">自</span><span class="c">定</span><span class="c">形</span><span class="c">状</span><span class="d">...</span></div>
<div class="r" style="left:114px;top:443.1px;width:174px;height:1px;background:#c9c9c9;"></div>
<div class="t " style="left:126.3px;top:448.60px;height:14px;font-size:9.6px;line-height:14px;--c:#141414;color:#141414;"><span class="c">清</span><span class="c">理</span><span class="k">(R)</span></div>
<svg class="i" style="left:280px;top:450.8px;" width="4" height="6" viewBox="0 0 4 6"><path d="M0.3 0.3 L3.3 2.9 L0.3 5.5Z" fill="#111"/></svg>
<div class="r" style="left:114px;top:465.3px;width:174px;height:1px;background:#c9c9c9;"></div>
<div class="t " style="left:126.3px;top:469.80px;height:14px;font-size:9.6px;line-height:14px;--c:#141414;color:#141414;">Adobe&nbsp;PDF&nbsp;<span class="c">预</span><span class="c">设</span><span class="d">...</span></div>
<div class="t " style="left:126.3px;top:485.40px;height:14px;font-size:9.6px;line-height:14px;--c:#141414;color:#141414;"><span class="c">预</span><span class="c">设</span></div>
<svg class="i" style="left:280px;top:487.59999999999997px;" width="4" height="6" viewBox="0 0 4 6"><path d="M0.3 0.3 L3.3 2.9 L0.3 5.5Z" fill="#111"/></svg>
<div class="t " style="left:126.3px;top:500.60px;height:14px;font-size:9.6px;line-height:14px;--c:#141414;color:#141414;"><span class="c">远</span><span class="c">程</span><span class="c">连</span><span class="c">接</span><span class="d">...</span></div>
<div class="r" style="left:114px;top:518.1px;width:174px;height:1px;background:#c9c9c9;"></div>
<div class="t " style="left:126.3px;top:522.80px;height:14px;font-size:9.6px;line-height:14px;--c:#141414;color:#141414;"><span class="c">颜</span><span class="c">色</span><span class="c">设</span><span class="c">置</span><span class="k">(G)</span><span class="d">...</span></div>
<div class="t " style="right:722.8px;top:522.80px;height:14px;font-size:9.6px;line-height:14px;--c:#141414;color:#141414;">Shift+Ctrl+K</div>
<svg class="i" style="left:128.3px;top:543px;" width="6.4" height="4" viewBox="0 0 6.4 4"><path d="M0 0.2 L6.4 0.2 L3.2 3.8Z" fill="#111"/></svg>
</body></html>
